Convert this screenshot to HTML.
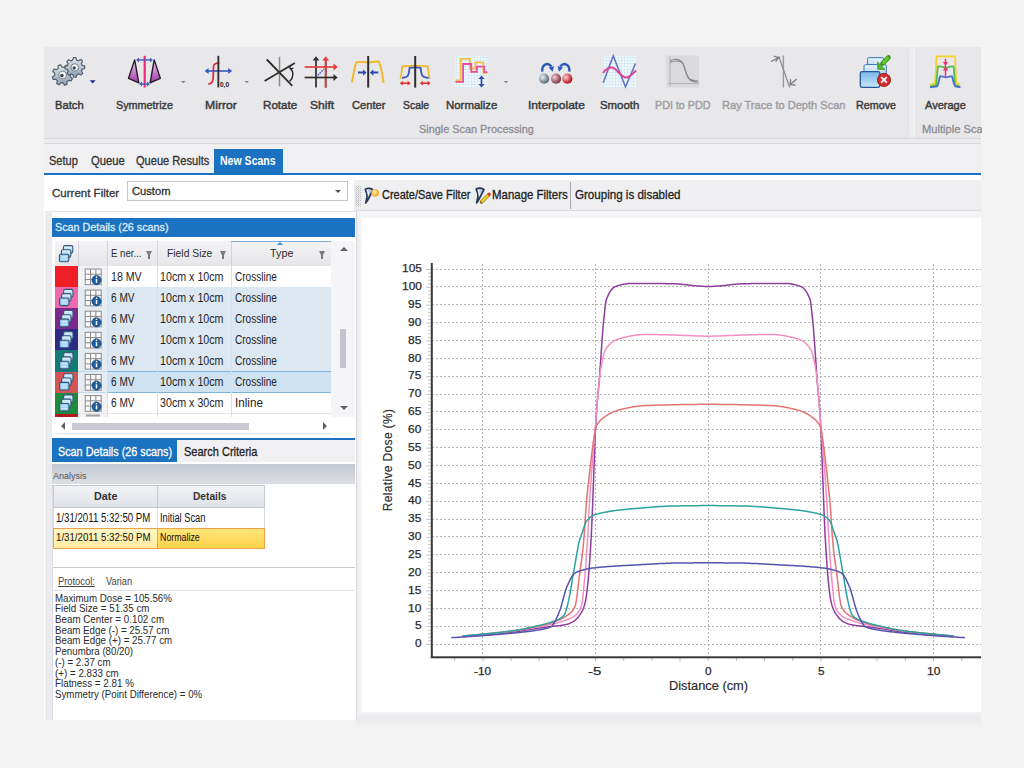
<!DOCTYPE html><html><head><meta charset="utf-8"><style>
html,body{margin:0;padding:0;width:1024px;height:768px;overflow:hidden;background:#f3f3f3;}
body{position:relative;font-family:"Liberation Sans",sans-serif;}
div{box-sizing:border-box;}
.t{position:absolute;white-space:nowrap;line-height:1;transform-origin:0 0;}
</style></head><body>
<div style="position:absolute;left:44px;top:47px;width:937px;height:92px;background:#e8e8eb;"></div>
<div style="position:absolute;left:44px;top:138px;width:937px;height:1px;background:#d4d4d8;"></div>
<div style="position:absolute;left:44px;top:139px;width:937px;height:5px;background:#ececef;"></div>
<div style="position:absolute;left:44px;top:143px;width:937px;height:1px;background:#d8d8dc;"></div>
<div style="position:absolute;left:44px;top:144px;width:937px;height:29px;background:#f0f0f2;"></div>
<div style="position:absolute;left:44px;top:172.5px;width:937px;height:2.5px;background:#1b72c0;"></div>
<div style="position:absolute;left:44px;top:175px;width:937px;height:545px;background:#ffffff;"></div>
<div style="position:absolute;left:908.5px;top:47px;width:6.5px;height:91px;background:#ededf0;"></div>
<div style="position:absolute;left:908px;top:49px;width:1px;height:86px;background:#e4e4e8;"></div>
<div class="t" style="left:55.30px;top:100.00px;font-size:11.34px;color:#3c3c3c;font-weight:normal;transform:scaleX(0.9907);-webkit-text-stroke:0.45px #3c3c3c;">Batch</div>
<div class="t" style="left:115.90px;top:100.00px;font-size:11.34px;color:#3c3c3c;font-weight:normal;transform:scaleX(0.9532);-webkit-text-stroke:0.45px #3c3c3c;">Symmetrize</div>
<div class="t" style="left:205.10px;top:100.00px;font-size:11.34px;color:#3c3c3c;font-weight:normal;transform:scaleX(1.0785);-webkit-text-stroke:0.45px #3c3c3c;">Mirror</div>
<div class="t" style="left:263.20px;top:100.00px;font-size:11.34px;color:#3c3c3c;font-weight:normal;transform:scaleX(1.0242);-webkit-text-stroke:0.45px #3c3c3c;">Rotate</div>
<div class="t" style="left:309.70px;top:100.00px;font-size:11.34px;color:#3c3c3c;font-weight:normal;transform:scaleX(1.0630);-webkit-text-stroke:0.45px #3c3c3c;">Shift</div>
<div class="t" style="left:352.10px;top:100.00px;font-size:11.34px;color:#3c3c3c;font-weight:normal;transform:scaleX(0.9819);-webkit-text-stroke:0.45px #3c3c3c;">Center</div>
<div class="t" style="left:402.70px;top:100.00px;font-size:11.34px;color:#3c3c3c;font-weight:normal;transform:scaleX(0.9173);-webkit-text-stroke:0.45px #3c3c3c;">Scale</div>
<div class="t" style="left:445.60px;top:100.00px;font-size:11.34px;color:#3c3c3c;font-weight:normal;transform:scaleX(1.0078);-webkit-text-stroke:0.45px #3c3c3c;">Normalize</div>
<div class="t" style="left:527.50px;top:100.00px;font-size:11.34px;color:#3c3c3c;font-weight:normal;transform:scaleX(1.0626);-webkit-text-stroke:0.45px #3c3c3c;">Interpolate</div>
<div class="t" style="left:599.70px;top:100.00px;font-size:11.34px;color:#3c3c3c;font-weight:normal;transform:scaleX(1.0065);-webkit-text-stroke:0.45px #3c3c3c;">Smooth</div>
<div class="t" style="left:654.80px;top:100.00px;font-size:11.34px;color:#a0a0a4;font-weight:normal;transform:scaleX(0.9480);-webkit-text-stroke:0.45px #a0a0a4;">PDI to PDD</div>
<div class="t" style="left:722.00px;top:100.00px;font-size:11.34px;color:#a0a0a4;font-weight:normal;transform:scaleX(0.9758);-webkit-text-stroke:0.45px #a0a0a4;">Ray Trace to Depth Scan</div>
<div class="t" style="left:856.00px;top:100.00px;font-size:11.34px;color:#3c3c3c;font-weight:normal;transform:scaleX(0.9481);-webkit-text-stroke:0.45px #3c3c3c;">Remove</div>
<div class="t" style="left:925.40px;top:100.00px;font-size:11.34px;color:#3c3c3c;font-weight:normal;transform:scaleX(0.9738);-webkit-text-stroke:0.45px #3c3c3c;">Average</div>
<div class="t" style="left:419.10px;top:123.69px;font-size:10.76px;color:#8c8c92;font-weight:normal;transform:scaleX(1.0119);-webkit-text-stroke:0.3px currentColor;">Single Scan Processing</div>
<div class="t" style="left:922.40px;top:123.69px;font-size:10.76px;color:#8c8c92;font-weight:normal;transform:scaleX(1.0380);-webkit-text-stroke:0.3px currentColor;">Multiple Scan</div>
<div style="position:absolute;left:214.2px;top:149.4px;width:68.6px;height:23.5px;background:#1b72c0;"></div>
<div class="t" style="left:49.40px;top:155.72px;font-size:11.85px;color:#333;font-weight:normal;transform:scaleX(0.9314);-webkit-text-stroke:0.3px currentColor;">Setup</div>
<div class="t" style="left:90.90px;top:155.72px;font-size:11.85px;color:#333;font-weight:normal;transform:scaleX(0.9489);-webkit-text-stroke:0.3px currentColor;">Queue</div>
<div class="t" style="left:136.30px;top:155.72px;font-size:11.85px;color:#333;font-weight:normal;transform:scaleX(0.9355);-webkit-text-stroke:0.3px currentColor;">Queue Results</div>
<div class="t" style="left:219.80px;top:155.72px;font-size:11.85px;color:#ffffff;font-weight:bold;transform:scaleX(0.8900);">New Scans</div>
<div class="t" style="left:51.80px;top:187.71px;font-size:11.26px;color:#333;font-weight:normal;transform:scaleX(1.0238);-webkit-text-stroke:0.3px currentColor;">Current Filter</div>
<div style="position:absolute;left:126.8px;top:180.7px;width:221px;height:20.5px;background:#fff;border:1px solid #c6c6ca;"></div>
<div class="t" style="left:132.10px;top:185.70px;font-size:10.68px;color:#333;font-weight:normal;transform:scaleX(1.0467);-webkit-text-stroke:0.3px currentColor;">Custom</div>
<div style="position:absolute;left:334.5px;top:189.5px;width:0;height:0;border-left:3.5px solid transparent;border-right:3.5px solid transparent;border-top:3.5px solid #555;"></div>
<div style="position:absolute;left:354px;top:180.3px;width:627px;height:29.5px;background:#efeff1;"></div>
<div style="position:absolute;left:354px;top:209.5px;width:627px;height:1.5px;background:#dcdce0;"></div>
<div style="position:absolute;left:570.3px;top:181.5px;width:1px;height:27px;background:#a8a8ac;"></div>
<div class="t" style="left:382.30px;top:189.39px;font-size:12.06px;color:#222;font-weight:normal;transform:scaleX(0.9105);-webkit-text-stroke:0.3px currentColor;">Create/Save Filter</div>
<div class="t" style="left:491.80px;top:189.39px;font-size:12.06px;color:#222;font-weight:normal;transform:scaleX(0.9500);-webkit-text-stroke:0.3px currentColor;">Manage Filters</div>
<div class="t" style="left:574.90px;top:189.39px;font-size:12.06px;color:#222;font-weight:normal;transform:scaleX(0.9606);-webkit-text-stroke:0.3px currentColor;">Grouping is disabled</div>
<div style="position:absolute;left:45px;top:211px;width:311px;height:509px;background:#fff;border-top:1px solid #e2e2e6;"></div>
<div style="position:absolute;left:45px;top:211px;width:7px;height:509px;background:#ebebf0;"></div>
<div style="position:absolute;left:51.8px;top:217.6px;width:303.2px;height:19.5px;background:#1b72c0;"></div>
<div class="t" style="left:54.90px;top:222.29px;font-size:10.76px;color:#dfeaf6;font-weight:normal;transform:scaleX(0.9997);-webkit-text-stroke:0.3px currentColor;">Scan Details (26 scans)</div>
<div style="position:absolute;left:356px;top:211px;width:625px;height:509px;background:#f2f2f5;"></div>
<div style="position:absolute;left:356px;top:211px;width:625px;height:7px;background:#f4f4f6;"></div>
<div style="position:absolute;left:356px;top:712px;width:625px;height:14px;background:linear-gradient(#f2f2f4,#e9e9ee 45%,#f2f2f2);"></div>
<div style="position:absolute;left:361px;top:218px;width:620px;height:494px;background:#fff;"></div>
<div style="position:absolute;left:356px;top:211px;width:1px;height:509px;background:#d8d8dc;"></div>
<div style="position:absolute;left:357px;top:218px;width:5px;height:494px;background:linear-gradient(90deg,#ececf0,#f8f8fa);"></div>
<div style="position:absolute;left:55px;top:240.5px;width:276.3px;height:26px;background:linear-gradient(#f4f4f6,#e6e6ea);border-bottom:1px solid #d0d0d6;"></div>
<div style="position:absolute;left:78px;top:241px;width:1px;height:25px;background:#d4d4da;"></div>
<div style="position:absolute;left:107px;top:241px;width:1px;height:25px;background:#d4d4da;"></div>
<div style="position:absolute;left:157.2px;top:241px;width:1px;height:25px;background:#d4d4da;"></div>
<div style="position:absolute;left:231.4px;top:241px;width:1px;height:25px;background:#d4d4da;"></div>
<div style="position:absolute;left:231.4px;top:240.5px;width:100px;height:1.5px;background:#79aee0;"></div>
<div style="position:absolute;left:276.5px;top:241.5px;width:0;height:0;border-left:3.5px solid transparent;border-right:3.5px solid transparent;border-bottom:3.5px solid #4a90d0;"></div>
<div class="t" style="left:110.50px;top:247.45px;font-size:11.63px;color:#2a2a2a;font-weight:normal;transform:scaleX(0.8289);">E ner...</div>
<div class="t" style="left:166.50px;top:247.45px;font-size:11.63px;color:#2a2a2a;font-weight:normal;transform:scaleX(0.8885);">Field Size</div>
<div class="t" style="left:269.80px;top:247.45px;font-size:11.63px;color:#2a2a2a;font-weight:normal;transform:scaleX(0.9296);">Type</div>
<div style="position:absolute;left:145.8px;top:251px;width:0;height:0;border-left:3.5px solid transparent;border-right:3.5px solid transparent;border-top:6px solid #7a7a80;"></div>
<div style="position:absolute;left:148.3px;top:255px;width:2px;height:4px;background:#7a7a80;"></div>
<div style="position:absolute;left:219.8px;top:251px;width:0;height:0;border-left:3.5px solid transparent;border-right:3.5px solid transparent;border-top:6px solid #7a7a80;"></div>
<div style="position:absolute;left:222.3px;top:255px;width:2px;height:4px;background:#7a7a80;"></div>
<div style="position:absolute;left:318.8px;top:251px;width:0;height:0;border-left:3.5px solid transparent;border-right:3.5px solid transparent;border-top:6px solid #7a7a80;"></div>
<div style="position:absolute;left:321.3px;top:255px;width:2px;height:4px;background:#7a7a80;"></div>
<div style="position:absolute;left:55px;top:266px;width:276.3px;height:151px;overflow:hidden;">
<div style="position:absolute;left:52px;top:0.00px;width:225px;height:21.30px;background:#ffffff;"></div>
<div style="position:absolute;left:23px;top:0.00px;width:29px;height:21.30px;background:#f2f3f5;"></div>
<div style="position:absolute;left:0;top:0.00px;width:23px;height:21.40px;background:#ee1f27;"></div>
<div style="position:absolute;left:23px;top:20.60px;width:254px;height:1px;background:#e4e6ea;"></div>
<div style="position:absolute;left:52px;top:21.10px;width:225px;height:21.30px;background:#dbe8f2;"></div>
<div style="position:absolute;left:23px;top:21.10px;width:29px;height:21.30px;background:#e4ebf1;"></div>
<div style="position:absolute;left:0;top:21.10px;width:23px;height:21.40px;background:#ef6aac;"></div>
<div style="position:absolute;left:23px;top:41.70px;width:254px;height:1px;background:#c5d8e8;"></div>
<div style="position:absolute;left:52px;top:42.20px;width:225px;height:21.30px;background:#dbe8f2;"></div>
<div style="position:absolute;left:23px;top:42.20px;width:29px;height:21.30px;background:#e4ebf1;"></div>
<div style="position:absolute;left:0;top:42.20px;width:23px;height:21.40px;background:#7a2a8c;"></div>
<div style="position:absolute;left:23px;top:62.80px;width:254px;height:1px;background:#c5d8e8;"></div>
<div style="position:absolute;left:52px;top:63.30px;width:225px;height:21.30px;background:#dbe8f2;"></div>
<div style="position:absolute;left:23px;top:63.30px;width:29px;height:21.30px;background:#e4ebf1;"></div>
<div style="position:absolute;left:0;top:63.30px;width:23px;height:21.40px;background:#2d2b83;"></div>
<div style="position:absolute;left:23px;top:83.90px;width:254px;height:1px;background:#c5d8e8;"></div>
<div style="position:absolute;left:52px;top:84.40px;width:225px;height:21.30px;background:#dbe8f2;"></div>
<div style="position:absolute;left:23px;top:84.40px;width:29px;height:21.30px;background:#e4ebf1;"></div>
<div style="position:absolute;left:0;top:84.40px;width:23px;height:21.40px;background:#137a76;"></div>
<div style="position:absolute;left:23px;top:105.00px;width:254px;height:1px;background:#c5d8e8;"></div>
<div style="position:absolute;left:52px;top:105.50px;width:225px;height:21.30px;background:#cfe2f1;"></div>
<div style="position:absolute;left:23px;top:105.50px;width:29px;height:21.30px;background:#e4ebf1;"></div>
<div style="position:absolute;left:0;top:105.50px;width:23px;height:21.40px;background:#d35454;"></div>
<div style="position:absolute;left:23px;top:126.10px;width:254px;height:1px;background:#c5d8e8;"></div>
<div style="position:absolute;left:52px;top:126.60px;width:225px;height:21.30px;background:#ffffff;"></div>
<div style="position:absolute;left:23px;top:126.60px;width:29px;height:21.30px;background:#f2f3f5;"></div>
<div style="position:absolute;left:0;top:126.60px;width:23px;height:21.40px;background:#1f8a3e;"></div>
<div style="position:absolute;left:23px;top:147.20px;width:254px;height:1px;background:#e4e6ea;"></div>
<div style="position:absolute;left:52px;top:147.70px;width:225px;height:21.30px;background:#ffffff;"></div>
<div style="position:absolute;left:23px;top:147.70px;width:29px;height:21.30px;background:#f2f3f5;"></div>
<div style="position:absolute;left:0;top:147.70px;width:23px;height:21.40px;background:#b31b1b;"></div>
<div style="position:absolute;left:23px;top:168.30px;width:254px;height:1px;background:#c5d8e8;"></div>
<div style="position:absolute;left:52px;top:104.70px;width:225px;height:1.5px;background:#7fb4e0;"></div>
<div style="position:absolute;left:52px;top:125.80px;width:225px;height:1.5px;background:#7fb4e0;"></div>
<div style="position:absolute;left:51.50px;top:0;width:1px;height:151px;background:#dcdde2;"></div>
<div style="position:absolute;left:101.70px;top:0;width:1px;height:151px;background:#dcdde2;"></div>
<div style="position:absolute;left:175.90px;top:0;width:1px;height:151px;background:#dcdde2;"></div>
</div>
<div class="t" style="left:110.70px;top:270.84px;font-size:12.35px;color:#1e1e1e;font-weight:normal;transform:scaleX(0.8602);">18 MV</div>
<div class="t" style="left:160.20px;top:270.84px;font-size:12.35px;color:#1e1e1e;font-weight:normal;transform:scaleX(0.8650);">10cm x 10cm</div>
<div class="t" style="left:234.60px;top:270.84px;font-size:12.35px;color:#1e1e1e;font-weight:normal;transform:scaleX(0.8143);">Crossline</div>
<div class="t" style="left:110.70px;top:291.94px;font-size:12.35px;color:#1e1e1e;font-weight:normal;transform:scaleX(0.8156);">6 MV</div>
<div class="t" style="left:160.20px;top:291.94px;font-size:12.35px;color:#1e1e1e;font-weight:normal;transform:scaleX(0.8650);">10cm x 10cm</div>
<div class="t" style="left:234.60px;top:291.94px;font-size:12.35px;color:#1e1e1e;font-weight:normal;transform:scaleX(0.8143);">Crossline</div>
<div class="t" style="left:110.70px;top:313.04px;font-size:12.35px;color:#1e1e1e;font-weight:normal;transform:scaleX(0.8156);">6 MV</div>
<div class="t" style="left:160.20px;top:313.04px;font-size:12.35px;color:#1e1e1e;font-weight:normal;transform:scaleX(0.8650);">10cm x 10cm</div>
<div class="t" style="left:234.60px;top:313.04px;font-size:12.35px;color:#1e1e1e;font-weight:normal;transform:scaleX(0.8143);">Crossline</div>
<div class="t" style="left:110.70px;top:334.14px;font-size:12.35px;color:#1e1e1e;font-weight:normal;transform:scaleX(0.8156);">6 MV</div>
<div class="t" style="left:160.20px;top:334.14px;font-size:12.35px;color:#1e1e1e;font-weight:normal;transform:scaleX(0.8650);">10cm x 10cm</div>
<div class="t" style="left:234.60px;top:334.14px;font-size:12.35px;color:#1e1e1e;font-weight:normal;transform:scaleX(0.8143);">Crossline</div>
<div class="t" style="left:110.70px;top:355.24px;font-size:12.35px;color:#1e1e1e;font-weight:normal;transform:scaleX(0.8156);">6 MV</div>
<div class="t" style="left:160.20px;top:355.24px;font-size:12.35px;color:#1e1e1e;font-weight:normal;transform:scaleX(0.8650);">10cm x 10cm</div>
<div class="t" style="left:234.60px;top:355.24px;font-size:12.35px;color:#1e1e1e;font-weight:normal;transform:scaleX(0.8143);">Crossline</div>
<div class="t" style="left:110.70px;top:376.34px;font-size:12.35px;color:#1e1e1e;font-weight:normal;transform:scaleX(0.8156);">6 MV</div>
<div class="t" style="left:160.20px;top:376.34px;font-size:12.35px;color:#1e1e1e;font-weight:normal;transform:scaleX(0.8650);">10cm x 10cm</div>
<div class="t" style="left:234.60px;top:376.34px;font-size:12.35px;color:#1e1e1e;font-weight:normal;transform:scaleX(0.8143);">Crossline</div>
<div class="t" style="left:110.70px;top:397.44px;font-size:12.35px;color:#1e1e1e;font-weight:normal;transform:scaleX(0.8156);">6 MV</div>
<div class="t" style="left:160.20px;top:397.44px;font-size:12.35px;color:#1e1e1e;font-weight:normal;transform:scaleX(0.8650);">30cm x 30cm</div>
<div class="t" style="left:234.60px;top:397.44px;font-size:12.35px;color:#1e1e1e;font-weight:normal;transform:scaleX(0.9453);">Inline</div>
<div style="position:absolute;left:331.3px;top:240.5px;width:24px;height:176.5px;background:#f5f5f7;"></div>
<div style="position:absolute;left:339.8px;top:246.5px;width:0;height:0;border-left:4px solid transparent;border-right:4px solid transparent;border-bottom:4px solid #606066;"></div>
<div style="position:absolute;left:339.8px;top:406px;width:0;height:0;border-left:4px solid transparent;border-right:4px solid transparent;border-top:4px solid #606066;"></div>
<div style="position:absolute;left:340px;top:328.7px;width:6.3px;height:39.4px;background:#c2c3cc;"></div>
<div style="position:absolute;left:55px;top:417px;width:276.3px;height:15.5px;background:#ffffff;"></div>
<div style="position:absolute;left:61px;top:422px;width:0;height:0;border-top:4px solid transparent;border-bottom:4px solid transparent;border-right:4px solid #606066;"></div>
<div style="position:absolute;left:322.5px;top:422px;width:0;height:0;border-top:4px solid transparent;border-bottom:4px solid transparent;border-left:4px solid #606066;"></div>
<div style="position:absolute;left:72px;top:422.7px;width:176.6px;height:7px;background:#c8c9d2;"></div>
<div style="position:absolute;left:55px;top:432.5px;width:276.3px;height:1px;background:#e6e6ea;"></div>
<div style="position:absolute;left:51.8px;top:437.8px;width:303.2px;height:2.2px;background:#1b72c0;"></div>
<div style="position:absolute;left:51.8px;top:440px;width:303.2px;height:22.2px;background:#f0f0f2;"></div>
<div style="position:absolute;left:51.8px;top:439.4px;width:125px;height:22.8px;background:#1b72c0;"></div>
<div class="t" style="left:58.00px;top:444.59px;font-size:13.01px;color:#ffffff;font-weight:normal;transform:scaleX(0.8311);-webkit-text-stroke:0.3px currentColor;">Scan Details (26 scans)</div>
<div class="t" style="left:184.00px;top:444.59px;font-size:13.01px;color:#222;font-weight:normal;transform:scaleX(0.8466);-webkit-text-stroke:0.3px currentColor;">Search Criteria</div>
<div style="position:absolute;left:51.8px;top:463.7px;width:303.2px;height:20px;background:linear-gradient(#c4c8d0,#dcdee4);"></div>
<div class="t" style="left:53.40px;top:471.03px;font-size:9.88px;color:#505058;font-weight:normal;transform:scaleX(0.9081);">Analysis</div>
<div style="position:absolute;left:52.7px;top:484.7px;width:212.5px;height:23.4px;background:linear-gradient(#f2f3f6,#dfe2e8);border:1px solid #c4c8d0;"></div>
<div style="position:absolute;left:157.1px;top:484.7px;width:1px;height:23.4px;background:#c4c8d0;"></div>
<div class="t" style="left:94.00px;top:491.19px;font-size:10.76px;color:#333;font-weight:bold;transform:scaleX(1.0038);">Date</div>
<div class="t" style="left:193.40px;top:491.19px;font-size:10.76px;color:#333;font-weight:bold;transform:scaleX(0.9471);">Details</div>
<div style="position:absolute;left:52.7px;top:508.1px;width:212.5px;height:20.4px;background:#fff;border-left:1px solid #d8dbe0;border-right:1px solid #d8dbe0;"></div>
<div style="position:absolute;left:157.1px;top:508.1px;width:1px;height:20.4px;background:#e0e2e6;"></div>
<div class="t" style="left:55.90px;top:511.12px;font-size:13.08px;color:#111;font-weight:normal;transform:scaleX(0.7386);">1/31/2011 5:32:50 PM</div>
<div class="t" style="left:159.60px;top:511.12px;font-size:13.08px;color:#111;font-weight:normal;transform:scaleX(0.7095);">Initial Scan</div>
<div style="position:absolute;left:52.7px;top:528.4px;width:104.9px;height:20.4px;background:linear-gradient(#fff6c4,#ffeaa0);border:1px solid #eda24a;border-right:none;"></div>
<div style="position:absolute;left:157.1px;top:528.4px;width:108.1px;height:20.4px;background:linear-gradient(#ffe47a,#ffd34a);border:1px solid #eda24a;"></div>
<div class="t" style="left:55.90px;top:532.74px;font-size:10.47px;color:#111;font-weight:normal;transform:scaleX(0.9242);">1/31/2011 5:32:50 PM</div>
<div class="t" style="left:159.60px;top:532.74px;font-size:10.47px;color:#111;font-weight:normal;transform:scaleX(0.8436);">Normalize</div>
<div style="position:absolute;left:51.8px;top:567.3px;width:303.2px;height:1.2px;background:#c8c8cc;"></div>
<div style="position:absolute;left:51.8px;top:483.7px;width:1px;height:236.3px;background:#dcdce2;"></div>
<div class="t" style="left:57.70px;top:575.79px;font-size:10.76px;color:#444;font-weight:normal;transform:scaleX(0.8672);text-decoration:underline;">Protocol:</div>
<div class="t" style="left:106.40px;top:575.79px;font-size:10.76px;color:#444;font-weight:normal;transform:scaleX(0.8619);">Varian</div>
<div style="position:absolute;left:52.8px;top:590px;width:302px;height:1px;background:#e2e2e6;"></div>
<div class="t" style="left:55.00px;top:593.56px;font-size:10.20px;color:#2a2a2a;font-weight:normal;transform:scaleX(0.9536);">Maximum Dose = 105.56%</div>
<div class="t" style="left:55.00px;top:604.27px;font-size:10.20px;color:#2a2a2a;font-weight:normal;transform:scaleX(0.9618);">Field Size = 51.35 cm</div>
<div class="t" style="left:55.00px;top:614.98px;font-size:10.20px;color:#2a2a2a;font-weight:normal;transform:scaleX(0.9604);">Beam Center = 0.102 cm</div>
<div class="t" style="left:55.00px;top:625.69px;font-size:10.20px;color:#2a2a2a;font-weight:normal;transform:scaleX(0.9544);">Beam Edge (-) = 25.57 cm</div>
<div class="t" style="left:55.00px;top:636.40px;font-size:10.20px;color:#2a2a2a;font-weight:normal;transform:scaleX(0.9581);">Beam Edge (+) = 25.77 cm</div>
<div class="t" style="left:55.00px;top:647.11px;font-size:10.20px;color:#2a2a2a;font-weight:normal;transform:scaleX(0.9510);">Penumbra (80/20)</div>
<div class="t" style="left:55.00px;top:657.82px;font-size:10.20px;color:#2a2a2a;font-weight:normal;transform:scaleX(0.9564);">(-) = 2.37 cm</div>
<div class="t" style="left:55.00px;top:668.53px;font-size:10.20px;color:#2a2a2a;font-weight:normal;transform:scaleX(0.9615);">(+) = 2.833 cm</div>
<div class="t" style="left:55.00px;top:679.24px;font-size:10.20px;color:#2a2a2a;font-weight:normal;transform:scaleX(0.9640);">Flatness = 2.81 %</div>
<div class="t" style="left:55.00px;top:689.95px;font-size:10.20px;color:#2a2a2a;font-weight:normal;transform:scaleX(0.9553);">Symmetry (Point Difference) = 0%</div>
<svg style="position:absolute;left:0;top:0" width="1024" height="768">
<defs><clipPath id="cp"><rect x="361" y="218" width="620" height="494"/></clipPath></defs>
<g clip-path="url(#cp)">
<line x1="432" y1="644.5" x2="981" y2="644.5" stroke="#b4b4b4" stroke-width="1" stroke-dasharray="2,2"/>
<line x1="432" y1="626.5" x2="981" y2="626.5" stroke="#b4b4b4" stroke-width="1" stroke-dasharray="2,2"/>
<line x1="432" y1="608.5" x2="981" y2="608.5" stroke="#b4b4b4" stroke-width="1" stroke-dasharray="2,2"/>
<line x1="432" y1="590.5" x2="981" y2="590.5" stroke="#b4b4b4" stroke-width="1" stroke-dasharray="2,2"/>
<line x1="432" y1="572.5" x2="981" y2="572.5" stroke="#b4b4b4" stroke-width="1" stroke-dasharray="2,2"/>
<line x1="432" y1="554.5" x2="981" y2="554.5" stroke="#b4b4b4" stroke-width="1" stroke-dasharray="2,2"/>
<line x1="432" y1="536.5" x2="981" y2="536.5" stroke="#b4b4b4" stroke-width="1" stroke-dasharray="2,2"/>
<line x1="432" y1="519.5" x2="981" y2="519.5" stroke="#b4b4b4" stroke-width="1" stroke-dasharray="2,2"/>
<line x1="432" y1="501.5" x2="981" y2="501.5" stroke="#b4b4b4" stroke-width="1" stroke-dasharray="2,2"/>
<line x1="432" y1="483.5" x2="981" y2="483.5" stroke="#b4b4b4" stroke-width="1" stroke-dasharray="2,2"/>
<line x1="432" y1="465.5" x2="981" y2="465.5" stroke="#b4b4b4" stroke-width="1" stroke-dasharray="2,2"/>
<line x1="432" y1="447.5" x2="981" y2="447.5" stroke="#b4b4b4" stroke-width="1" stroke-dasharray="2,2"/>
<line x1="432" y1="429.5" x2="981" y2="429.5" stroke="#b4b4b4" stroke-width="1" stroke-dasharray="2,2"/>
<line x1="432" y1="411.5" x2="981" y2="411.5" stroke="#b4b4b4" stroke-width="1" stroke-dasharray="2,2"/>
<line x1="432" y1="394.5" x2="981" y2="394.5" stroke="#b4b4b4" stroke-width="1" stroke-dasharray="2,2"/>
<line x1="432" y1="376.5" x2="981" y2="376.5" stroke="#b4b4b4" stroke-width="1" stroke-dasharray="2,2"/>
<line x1="432" y1="358.5" x2="981" y2="358.5" stroke="#b4b4b4" stroke-width="1" stroke-dasharray="2,2"/>
<line x1="432" y1="340.5" x2="981" y2="340.5" stroke="#b4b4b4" stroke-width="1" stroke-dasharray="2,2"/>
<line x1="432" y1="322.5" x2="981" y2="322.5" stroke="#b4b4b4" stroke-width="1" stroke-dasharray="2,2"/>
<line x1="432" y1="304.5" x2="981" y2="304.5" stroke="#b4b4b4" stroke-width="1" stroke-dasharray="2,2"/>
<line x1="432" y1="286.5" x2="981" y2="286.5" stroke="#b4b4b4" stroke-width="1" stroke-dasharray="2,2"/>
<line x1="432" y1="269.5" x2="981" y2="269.5" stroke="#b4b4b4" stroke-width="1" stroke-dasharray="2,2"/>
<line x1="482.5" y1="264" x2="482.5" y2="656" stroke="#b4b4b4" stroke-width="1" stroke-dasharray="2,2"/>
<line x1="595.5" y1="264" x2="595.5" y2="656" stroke="#b4b4b4" stroke-width="1" stroke-dasharray="2,2"/>
<line x1="708.5" y1="264" x2="708.5" y2="656" stroke="#b4b4b4" stroke-width="1" stroke-dasharray="2,2"/>
<line x1="820.5" y1="264" x2="820.5" y2="656" stroke="#b4b4b4" stroke-width="1" stroke-dasharray="2,2"/>
<line x1="933.5" y1="264" x2="933.5" y2="656" stroke="#b4b4b4" stroke-width="1" stroke-dasharray="2,2"/>
<line x1="426" y1="644.5" x2="431" y2="644.5" stroke="#c8c8c8" stroke-width="1"/>
<line x1="428" y1="640.9" x2="431" y2="640.9" stroke="#c8c8c8" stroke-width="1"/>
<line x1="428" y1="637.4" x2="431" y2="637.4" stroke="#c8c8c8" stroke-width="1"/>
<line x1="428" y1="633.8" x2="431" y2="633.8" stroke="#c8c8c8" stroke-width="1"/>
<line x1="428" y1="630.2" x2="431" y2="630.2" stroke="#c8c8c8" stroke-width="1"/>
<line x1="426" y1="626.6" x2="431" y2="626.6" stroke="#c8c8c8" stroke-width="1"/>
<line x1="428" y1="623.1" x2="431" y2="623.1" stroke="#c8c8c8" stroke-width="1"/>
<line x1="428" y1="619.5" x2="431" y2="619.5" stroke="#c8c8c8" stroke-width="1"/>
<line x1="428" y1="615.9" x2="431" y2="615.9" stroke="#c8c8c8" stroke-width="1"/>
<line x1="428" y1="612.4" x2="431" y2="612.4" stroke="#c8c8c8" stroke-width="1"/>
<line x1="426" y1="608.8" x2="431" y2="608.8" stroke="#c8c8c8" stroke-width="1"/>
<line x1="428" y1="605.2" x2="431" y2="605.2" stroke="#c8c8c8" stroke-width="1"/>
<line x1="428" y1="601.6" x2="431" y2="601.6" stroke="#c8c8c8" stroke-width="1"/>
<line x1="428" y1="598.1" x2="431" y2="598.1" stroke="#c8c8c8" stroke-width="1"/>
<line x1="428" y1="594.5" x2="431" y2="594.5" stroke="#c8c8c8" stroke-width="1"/>
<line x1="426" y1="590.9" x2="431" y2="590.9" stroke="#c8c8c8" stroke-width="1"/>
<line x1="428" y1="587.4" x2="431" y2="587.4" stroke="#c8c8c8" stroke-width="1"/>
<line x1="428" y1="583.8" x2="431" y2="583.8" stroke="#c8c8c8" stroke-width="1"/>
<line x1="428" y1="580.2" x2="431" y2="580.2" stroke="#c8c8c8" stroke-width="1"/>
<line x1="428" y1="576.6" x2="431" y2="576.6" stroke="#c8c8c8" stroke-width="1"/>
<line x1="426" y1="573.1" x2="431" y2="573.1" stroke="#c8c8c8" stroke-width="1"/>
<line x1="428" y1="569.5" x2="431" y2="569.5" stroke="#c8c8c8" stroke-width="1"/>
<line x1="428" y1="565.9" x2="431" y2="565.9" stroke="#c8c8c8" stroke-width="1"/>
<line x1="428" y1="562.4" x2="431" y2="562.4" stroke="#c8c8c8" stroke-width="1"/>
<line x1="428" y1="558.8" x2="431" y2="558.8" stroke="#c8c8c8" stroke-width="1"/>
<line x1="426" y1="555.2" x2="431" y2="555.2" stroke="#c8c8c8" stroke-width="1"/>
<line x1="428" y1="551.6" x2="431" y2="551.6" stroke="#c8c8c8" stroke-width="1"/>
<line x1="428" y1="548.1" x2="431" y2="548.1" stroke="#c8c8c8" stroke-width="1"/>
<line x1="428" y1="544.5" x2="431" y2="544.5" stroke="#c8c8c8" stroke-width="1"/>
<line x1="428" y1="540.9" x2="431" y2="540.9" stroke="#c8c8c8" stroke-width="1"/>
<line x1="426" y1="537.4" x2="431" y2="537.4" stroke="#c8c8c8" stroke-width="1"/>
<line x1="428" y1="533.8" x2="431" y2="533.8" stroke="#c8c8c8" stroke-width="1"/>
<line x1="428" y1="530.2" x2="431" y2="530.2" stroke="#c8c8c8" stroke-width="1"/>
<line x1="428" y1="526.6" x2="431" y2="526.6" stroke="#c8c8c8" stroke-width="1"/>
<line x1="428" y1="523.1" x2="431" y2="523.1" stroke="#c8c8c8" stroke-width="1"/>
<line x1="426" y1="519.5" x2="431" y2="519.5" stroke="#c8c8c8" stroke-width="1"/>
<line x1="428" y1="515.9" x2="431" y2="515.9" stroke="#c8c8c8" stroke-width="1"/>
<line x1="428" y1="512.4" x2="431" y2="512.4" stroke="#c8c8c8" stroke-width="1"/>
<line x1="428" y1="508.8" x2="431" y2="508.8" stroke="#c8c8c8" stroke-width="1"/>
<line x1="428" y1="505.2" x2="431" y2="505.2" stroke="#c8c8c8" stroke-width="1"/>
<line x1="426" y1="501.6" x2="431" y2="501.6" stroke="#c8c8c8" stroke-width="1"/>
<line x1="428" y1="498.1" x2="431" y2="498.1" stroke="#c8c8c8" stroke-width="1"/>
<line x1="428" y1="494.5" x2="431" y2="494.5" stroke="#c8c8c8" stroke-width="1"/>
<line x1="428" y1="490.9" x2="431" y2="490.9" stroke="#c8c8c8" stroke-width="1"/>
<line x1="428" y1="487.4" x2="431" y2="487.4" stroke="#c8c8c8" stroke-width="1"/>
<line x1="426" y1="483.8" x2="431" y2="483.8" stroke="#c8c8c8" stroke-width="1"/>
<line x1="428" y1="480.2" x2="431" y2="480.2" stroke="#c8c8c8" stroke-width="1"/>
<line x1="428" y1="476.6" x2="431" y2="476.6" stroke="#c8c8c8" stroke-width="1"/>
<line x1="428" y1="473.1" x2="431" y2="473.1" stroke="#c8c8c8" stroke-width="1"/>
<line x1="428" y1="469.5" x2="431" y2="469.5" stroke="#c8c8c8" stroke-width="1"/>
<line x1="426" y1="465.9" x2="431" y2="465.9" stroke="#c8c8c8" stroke-width="1"/>
<line x1="428" y1="462.4" x2="431" y2="462.4" stroke="#c8c8c8" stroke-width="1"/>
<line x1="428" y1="458.8" x2="431" y2="458.8" stroke="#c8c8c8" stroke-width="1"/>
<line x1="428" y1="455.2" x2="431" y2="455.2" stroke="#c8c8c8" stroke-width="1"/>
<line x1="428" y1="451.6" x2="431" y2="451.6" stroke="#c8c8c8" stroke-width="1"/>
<line x1="426" y1="448.1" x2="431" y2="448.1" stroke="#c8c8c8" stroke-width="1"/>
<line x1="428" y1="444.5" x2="431" y2="444.5" stroke="#c8c8c8" stroke-width="1"/>
<line x1="428" y1="440.9" x2="431" y2="440.9" stroke="#c8c8c8" stroke-width="1"/>
<line x1="428" y1="437.4" x2="431" y2="437.4" stroke="#c8c8c8" stroke-width="1"/>
<line x1="428" y1="433.8" x2="431" y2="433.8" stroke="#c8c8c8" stroke-width="1"/>
<line x1="426" y1="430.2" x2="431" y2="430.2" stroke="#c8c8c8" stroke-width="1"/>
<line x1="428" y1="426.6" x2="431" y2="426.6" stroke="#c8c8c8" stroke-width="1"/>
<line x1="428" y1="423.1" x2="431" y2="423.1" stroke="#c8c8c8" stroke-width="1"/>
<line x1="428" y1="419.5" x2="431" y2="419.5" stroke="#c8c8c8" stroke-width="1"/>
<line x1="428" y1="415.9" x2="431" y2="415.9" stroke="#c8c8c8" stroke-width="1"/>
<line x1="426" y1="412.4" x2="431" y2="412.4" stroke="#c8c8c8" stroke-width="1"/>
<line x1="428" y1="408.8" x2="431" y2="408.8" stroke="#c8c8c8" stroke-width="1"/>
<line x1="428" y1="405.2" x2="431" y2="405.2" stroke="#c8c8c8" stroke-width="1"/>
<line x1="428" y1="401.6" x2="431" y2="401.6" stroke="#c8c8c8" stroke-width="1"/>
<line x1="428" y1="398.1" x2="431" y2="398.1" stroke="#c8c8c8" stroke-width="1"/>
<line x1="426" y1="394.5" x2="431" y2="394.5" stroke="#c8c8c8" stroke-width="1"/>
<line x1="428" y1="390.9" x2="431" y2="390.9" stroke="#c8c8c8" stroke-width="1"/>
<line x1="428" y1="387.4" x2="431" y2="387.4" stroke="#c8c8c8" stroke-width="1"/>
<line x1="428" y1="383.8" x2="431" y2="383.8" stroke="#c8c8c8" stroke-width="1"/>
<line x1="428" y1="380.2" x2="431" y2="380.2" stroke="#c8c8c8" stroke-width="1"/>
<line x1="426" y1="376.6" x2="431" y2="376.6" stroke="#c8c8c8" stroke-width="1"/>
<line x1="428" y1="373.1" x2="431" y2="373.1" stroke="#c8c8c8" stroke-width="1"/>
<line x1="428" y1="369.5" x2="431" y2="369.5" stroke="#c8c8c8" stroke-width="1"/>
<line x1="428" y1="365.9" x2="431" y2="365.9" stroke="#c8c8c8" stroke-width="1"/>
<line x1="428" y1="362.4" x2="431" y2="362.4" stroke="#c8c8c8" stroke-width="1"/>
<line x1="426" y1="358.8" x2="431" y2="358.8" stroke="#c8c8c8" stroke-width="1"/>
<line x1="428" y1="355.2" x2="431" y2="355.2" stroke="#c8c8c8" stroke-width="1"/>
<line x1="428" y1="351.6" x2="431" y2="351.6" stroke="#c8c8c8" stroke-width="1"/>
<line x1="428" y1="348.1" x2="431" y2="348.1" stroke="#c8c8c8" stroke-width="1"/>
<line x1="428" y1="344.5" x2="431" y2="344.5" stroke="#c8c8c8" stroke-width="1"/>
<line x1="426" y1="340.9" x2="431" y2="340.9" stroke="#c8c8c8" stroke-width="1"/>
<line x1="428" y1="337.4" x2="431" y2="337.4" stroke="#c8c8c8" stroke-width="1"/>
<line x1="428" y1="333.8" x2="431" y2="333.8" stroke="#c8c8c8" stroke-width="1"/>
<line x1="428" y1="330.2" x2="431" y2="330.2" stroke="#c8c8c8" stroke-width="1"/>
<line x1="428" y1="326.6" x2="431" y2="326.6" stroke="#c8c8c8" stroke-width="1"/>
<line x1="426" y1="323.1" x2="431" y2="323.1" stroke="#c8c8c8" stroke-width="1"/>
<line x1="428" y1="319.5" x2="431" y2="319.5" stroke="#c8c8c8" stroke-width="1"/>
<line x1="428" y1="315.9" x2="431" y2="315.9" stroke="#c8c8c8" stroke-width="1"/>
<line x1="428" y1="312.4" x2="431" y2="312.4" stroke="#c8c8c8" stroke-width="1"/>
<line x1="428" y1="308.8" x2="431" y2="308.8" stroke="#c8c8c8" stroke-width="1"/>
<line x1="426" y1="305.2" x2="431" y2="305.2" stroke="#c8c8c8" stroke-width="1"/>
<line x1="428" y1="301.6" x2="431" y2="301.6" stroke="#c8c8c8" stroke-width="1"/>
<line x1="428" y1="298.1" x2="431" y2="298.1" stroke="#c8c8c8" stroke-width="1"/>
<line x1="428" y1="294.5" x2="431" y2="294.5" stroke="#c8c8c8" stroke-width="1"/>
<line x1="428" y1="290.9" x2="431" y2="290.9" stroke="#c8c8c8" stroke-width="1"/>
<line x1="426" y1="287.4" x2="431" y2="287.4" stroke="#c8c8c8" stroke-width="1"/>
<line x1="428" y1="283.8" x2="431" y2="283.8" stroke="#c8c8c8" stroke-width="1"/>
<line x1="428" y1="280.2" x2="431" y2="280.2" stroke="#c8c8c8" stroke-width="1"/>
<line x1="428" y1="276.6" x2="431" y2="276.6" stroke="#c8c8c8" stroke-width="1"/>
<line x1="428" y1="273.1" x2="431" y2="273.1" stroke="#c8c8c8" stroke-width="1"/>
<line x1="426" y1="269.5" x2="431" y2="269.5" stroke="#c8c8c8" stroke-width="1"/>
<line x1="454.7" y1="657" x2="454.7" y2="661" stroke="#c0c0c0" stroke-width="1"/>
<line x1="482.9" y1="657" x2="482.9" y2="661" stroke="#c0c0c0" stroke-width="1"/>
<line x1="511.1" y1="657" x2="511.1" y2="661" stroke="#c0c0c0" stroke-width="1"/>
<line x1="539.2" y1="657" x2="539.2" y2="661" stroke="#c0c0c0" stroke-width="1"/>
<line x1="567.4" y1="657" x2="567.4" y2="661" stroke="#c0c0c0" stroke-width="1"/>
<line x1="595.6" y1="657" x2="595.6" y2="661" stroke="#c0c0c0" stroke-width="1"/>
<line x1="623.7" y1="657" x2="623.7" y2="661" stroke="#c0c0c0" stroke-width="1"/>
<line x1="651.9" y1="657" x2="651.9" y2="661" stroke="#c0c0c0" stroke-width="1"/>
<line x1="680.0" y1="657" x2="680.0" y2="661" stroke="#c0c0c0" stroke-width="1"/>
<line x1="708.2" y1="657" x2="708.2" y2="661" stroke="#c0c0c0" stroke-width="1"/>
<line x1="736.4" y1="657" x2="736.4" y2="661" stroke="#c0c0c0" stroke-width="1"/>
<line x1="764.5" y1="657" x2="764.5" y2="661" stroke="#c0c0c0" stroke-width="1"/>
<line x1="792.7" y1="657" x2="792.7" y2="661" stroke="#c0c0c0" stroke-width="1"/>
<line x1="820.9" y1="657" x2="820.9" y2="661" stroke="#c0c0c0" stroke-width="1"/>
<line x1="849.0" y1="657" x2="849.0" y2="661" stroke="#c0c0c0" stroke-width="1"/>
<line x1="877.2" y1="657" x2="877.2" y2="661" stroke="#c0c0c0" stroke-width="1"/>
<line x1="905.3" y1="657" x2="905.3" y2="661" stroke="#c0c0c0" stroke-width="1"/>
<line x1="933.5" y1="657" x2="933.5" y2="661" stroke="#c0c0c0" stroke-width="1"/>
<line x1="961.7" y1="657" x2="961.7" y2="661" stroke="#c0c0c0" stroke-width="1"/>
<polyline fill="none" stroke="#8e3d9f" stroke-width="1.5" stroke-linejoin="round" points="462.6,636.6 463.6,636.6 464.6,636.5 465.6,636.4 466.6,636.4 467.5,636.3 468.5,636.3 469.5,636.2 470.5,636.1 471.5,636.1 472.4,636.0 473.4,635.9 474.4,635.9 475.4,635.8 476.4,635.7 477.4,635.6 478.3,635.6 479.3,635.5 480.3,635.4 481.3,635.3 482.3,635.3 483.3,635.2 484.2,635.1 485.2,635.0 486.2,634.9 487.2,634.8 488.2,634.8 489.1,634.7 490.1,634.6 491.1,634.5 492.1,634.4 493.1,634.3 494.1,634.2 495.0,634.1 496.0,634.0 497.0,633.9 498.0,633.8 499.0,633.7 500.0,633.6 500.9,633.5 501.9,633.4 502.9,633.3 503.9,633.2 504.9,633.1 505.8,633.0 506.8,632.8 507.8,632.7 508.8,632.6 509.8,632.5 510.8,632.4 511.7,632.3 512.7,632.1 513.7,632.0 514.7,631.9 515.7,631.8 516.6,631.6 517.6,631.5 518.6,631.4 519.6,631.2 520.6,631.1 521.6,630.9 522.5,630.8 523.5,630.6 524.5,630.5 525.5,630.3 526.5,630.1 527.5,630.0 528.4,629.8 529.4,629.6 530.4,629.5 531.4,629.3 532.4,629.1 533.3,629.0 534.3,628.8 535.3,628.7 536.3,628.5 537.3,628.4 538.3,628.2 539.2,628.1 540.2,628.0 541.2,627.8 542.2,627.7 543.2,627.6 544.2,627.5 545.1,627.3 546.1,627.2 547.1,627.1 548.1,627.0 549.1,626.8 550.0,626.7 551.0,626.6 552.0,626.4 553.0,626.3 554.0,626.2 555.0,626.1 555.9,626.0 556.9,625.9 557.9,625.8 558.9,625.7 559.9,625.6 560.9,625.4 561.8,625.3 562.8,625.2 563.8,625.0 564.8,624.8 565.8,624.6 566.7,624.4 567.7,624.1 568.7,623.8 569.7,623.4 570.7,622.9 571.7,622.4 572.6,621.9 573.6,621.3 574.6,620.6 575.6,619.8 576.6,618.9 577.6,617.9 578.5,616.7 579.5,615.4 580.5,613.9 581.5,612.3 582.5,610.5 583.4,608.2 584.4,605.4 585.4,601.6 586.4,595.9 587.4,587.6 588.4,577.7 589.3,566.5 590.3,552.3 591.3,535.4 592.3,513.1 593.3,486.9 594.3,459.9 595.2,435.2 596.2,416.1 597.2,402.7 598.2,391.7 599.2,380.9 600.1,368.3 601.1,353.9 602.1,339.4 603.1,326.7 604.1,316.6 605.1,307.2 606.0,300.7 607.0,297.8 608.0,295.6 609.0,293.6 610.0,291.9 611.0,290.4 611.9,289.2 612.9,288.2 613.9,287.4 614.9,286.8 615.9,286.4 616.8,286.0 617.8,285.7 618.8,285.4 619.8,285.1 620.8,284.9 621.8,284.6 622.7,284.4 623.7,284.2 624.7,284.0 625.7,283.9 626.7,283.7 627.7,283.6 628.6,283.5 629.6,283.5 630.6,283.4 631.6,283.4 632.6,283.4 633.5,283.4 634.5,283.4 635.5,283.4 636.5,283.4 637.5,283.4 638.5,283.4 639.4,283.4 640.4,283.4 641.4,283.4 642.4,283.5 643.4,283.5 644.3,283.5 645.3,283.5 646.3,283.5 647.3,283.5 648.3,283.5 649.3,283.5 650.2,283.5 651.2,283.5 652.2,283.5 653.2,283.5 654.2,283.5 655.2,283.5 656.1,283.5 657.1,283.6 658.1,283.6 659.1,283.6 660.1,283.6 661.0,283.6 662.0,283.6 663.0,283.6 664.0,283.6 665.0,283.6 666.0,283.7 666.9,283.7 667.9,283.7 668.9,283.7 669.9,283.7 670.9,283.7 671.9,283.7 672.8,283.8 673.8,283.8 674.8,283.8 675.8,283.8 676.8,283.9 677.7,283.9 678.7,284.0 679.7,284.1 680.7,284.2 681.7,284.3 682.7,284.4 683.6,284.5 684.6,284.6 685.6,284.7 686.6,284.9 687.6,285.0 688.6,285.1 689.5,285.2 690.5,285.3 691.5,285.5 692.5,285.6 693.5,285.7 694.4,285.7 695.4,285.8 696.4,285.9 697.4,286.0 698.4,286.0 699.4,286.1 700.3,286.1 701.3,286.2 702.3,286.3 703.3,286.3 704.3,286.4 705.3,286.5 706.2,286.5 707.2,286.6 708.2,286.6 709.2,286.6 710.2,286.5 711.1,286.5 712.1,286.4 713.1,286.3 714.1,286.3 715.1,286.2 716.1,286.1 717.0,286.1 718.0,286.0 719.0,286.0 720.0,285.9 721.0,285.8 722.0,285.7 722.9,285.7 723.9,285.6 724.9,285.5 725.9,285.3 726.9,285.2 727.8,285.1 728.8,285.0 729.8,284.9 730.8,284.7 731.8,284.6 732.8,284.5 733.7,284.4 734.7,284.3 735.7,284.2 736.7,284.1 737.7,284.0 738.7,283.9 739.6,283.9 740.6,283.8 741.6,283.8 742.6,283.8 743.6,283.8 744.5,283.7 745.5,283.7 746.5,283.7 747.5,283.7 748.5,283.7 749.5,283.7 750.4,283.7 751.4,283.6 752.4,283.6 753.4,283.6 754.4,283.6 755.4,283.6 756.3,283.6 757.3,283.6 758.3,283.6 759.3,283.6 760.3,283.5 761.2,283.5 762.2,283.5 763.2,283.5 764.2,283.5 765.2,283.5 766.2,283.5 767.1,283.5 768.1,283.5 769.1,283.5 770.1,283.5 771.1,283.5 772.1,283.5 773.0,283.5 774.0,283.5 775.0,283.4 776.0,283.4 777.0,283.4 777.9,283.4 778.9,283.4 779.9,283.4 780.9,283.4 781.9,283.4 782.9,283.4 783.8,283.4 784.8,283.4 785.8,283.4 786.8,283.5 787.8,283.5 788.7,283.6 789.7,283.7 790.7,283.9 791.7,284.0 792.7,284.2 793.7,284.4 794.6,284.6 795.6,284.9 796.6,285.1 797.6,285.4 798.6,285.7 799.6,286.0 800.5,286.4 801.5,286.8 802.5,287.4 803.5,288.2 804.5,289.2 805.4,290.4 806.4,291.9 807.4,293.6 808.4,295.6 809.4,297.8 810.4,300.7 811.3,307.2 812.3,316.6 813.3,326.7 814.3,339.4 815.3,353.9 816.3,368.3 817.2,380.9 818.2,391.7 819.2,402.7 820.2,416.1 821.2,435.2 822.1,459.9 823.1,486.9 824.1,513.1 825.1,535.4 826.1,552.3 827.1,566.5 828.0,577.7 829.0,587.6 830.0,595.9 831.0,601.6 832.0,605.4 833.0,608.2 833.9,610.5 834.9,612.3 835.9,613.9 836.9,615.4 837.9,616.7 838.8,617.9 839.8,618.9 840.8,619.8 841.8,620.6 842.8,621.3 843.8,621.9 844.7,622.4 845.7,622.9 846.7,623.4 847.7,623.8 848.7,624.1 849.7,624.4 850.6,624.6 851.6,624.8 852.6,625.0 853.6,625.2 854.6,625.3 855.5,625.4 856.5,625.6 857.5,625.7 858.5,625.8 859.5,625.9 860.5,626.0 861.4,626.1 862.4,626.2 863.4,626.3 864.4,626.4 865.4,626.6 866.4,626.7 867.3,626.8 868.3,627.0 869.3,627.1 870.3,627.2 871.3,627.3 872.2,627.5 873.2,627.6 874.2,627.7 875.2,627.8 876.2,628.0 877.2,628.1 878.1,628.2 879.1,628.4 880.1,628.5 881.1,628.7 882.1,628.8 883.1,629.0 884.0,629.1 885.0,629.3 886.0,629.5 887.0,629.6 888.0,629.8 888.9,630.0 889.9,630.1 890.9,630.3 891.9,630.5 892.9,630.6 893.9,630.8 894.8,630.9 895.8,631.1 896.8,631.2 897.8,631.4 898.8,631.5 899.8,631.6 900.7,631.8 901.7,631.9 902.7,632.0 903.7,632.1 904.7,632.3 905.6,632.4 906.6,632.5 907.6,632.6 908.6,632.7 909.6,632.8 910.6,633.0 911.5,633.1 912.5,633.2 913.5,633.3 914.5,633.4 915.5,633.5 916.4,633.6 917.4,633.7 918.4,633.8 919.4,633.9 920.4,634.0 921.4,634.1 922.3,634.2 923.3,634.3 924.3,634.4 925.3,634.5 926.3,634.6 927.3,634.7 928.2,634.8 929.2,634.8 930.2,634.9 931.2,635.0 932.2,635.1 933.1,635.2 934.1,635.3 935.1,635.3 936.1,635.4 937.1,635.5 938.1,635.6 939.0,635.6 940.0,635.7 941.0,635.8 942.0,635.9 943.0,635.9 944.0,636.0 944.9,636.1 945.9,636.1 946.9,636.2 947.9,636.3 948.9,636.3 949.8,636.4 950.8,636.4 951.8,636.5 952.8,636.6 953.8,636.6"/>
<polyline fill="none" stroke="#f48ec2" stroke-width="1.5" stroke-linejoin="round" points="462.6,636.1 463.6,636.1 464.6,636.0 465.6,635.9 466.6,635.9 467.5,635.8 468.5,635.7 469.5,635.6 470.5,635.6 471.5,635.5 472.4,635.4 473.4,635.3 474.4,635.2 475.4,635.2 476.4,635.1 477.4,635.0 478.3,634.9 479.3,634.8 480.3,634.7 481.3,634.6 482.3,634.6 483.3,634.5 484.2,634.4 485.2,634.3 486.2,634.2 487.2,634.1 488.2,634.0 489.1,633.9 490.1,633.8 491.1,633.7 492.1,633.6 493.1,633.5 494.1,633.4 495.0,633.3 496.0,633.2 497.0,633.1 498.0,632.9 499.0,632.8 500.0,632.7 500.9,632.6 501.9,632.5 502.9,632.4 503.9,632.3 504.9,632.1 505.8,632.0 506.8,631.9 507.8,631.8 508.8,631.6 509.8,631.5 510.8,631.4 511.7,631.3 512.7,631.1 513.7,631.0 514.7,630.9 515.7,630.7 516.6,630.6 517.6,630.4 518.6,630.3 519.6,630.1 520.6,630.0 521.6,629.8 522.5,629.6 523.5,629.5 524.5,629.3 525.5,629.1 526.5,628.9 527.5,628.8 528.4,628.6 529.4,628.4 530.4,628.2 531.4,628.0 532.4,627.9 533.3,627.7 534.3,627.5 535.3,627.3 536.3,627.1 537.3,626.9 538.3,626.8 539.2,626.6 540.2,626.4 541.2,626.3 542.2,626.1 543.2,625.9 544.2,625.8 545.1,625.6 546.1,625.4 547.1,625.2 548.1,625.0 549.1,624.8 550.0,624.6 551.0,624.4 552.0,624.1 553.0,623.9 554.0,623.7 555.0,623.4 555.9,623.2 556.9,622.9 557.9,622.7 558.9,622.4 559.9,622.1 560.9,621.8 561.8,621.5 562.8,621.2 563.8,620.9 564.8,620.5 565.8,620.2 566.7,619.8 567.7,619.4 568.7,619.0 569.7,618.6 570.7,618.1 571.7,617.6 572.6,617.1 573.6,616.5 574.6,615.8 575.6,615.0 576.6,614.1 577.6,613.0 578.5,611.8 579.5,610.3 580.5,608.3 581.5,605.5 582.5,600.1 583.4,591.7 584.4,581.4 585.4,570.5 586.4,556.8 587.4,541.2 588.4,524.0 589.3,506.0 590.3,490.6 591.3,476.6 592.3,463.6 593.3,451.2 594.3,439.6 595.2,429.0 596.2,417.5 597.2,403.7 598.2,390.6 599.2,380.9 600.1,372.9 601.1,366.8 602.1,361.5 603.1,356.9 604.1,353.1 605.1,350.5 606.0,348.9 607.0,347.5 608.0,346.2 609.0,345.0 610.0,344.0 611.0,343.0 611.9,342.2 612.9,341.5 613.9,340.9 614.9,340.3 615.9,339.9 616.8,339.5 617.8,339.2 618.8,338.9 619.8,338.6 620.8,338.3 621.8,338.0 622.7,337.8 623.7,337.5 624.7,337.3 625.7,337.0 626.7,336.8 627.7,336.6 628.6,336.4 629.6,336.2 630.6,336.0 631.6,335.8 632.6,335.6 633.5,335.5 634.5,335.3 635.5,335.2 636.5,335.1 637.5,334.9 638.5,334.8 639.4,334.8 640.4,334.7 641.4,334.6 642.4,334.6 643.4,334.5 644.3,334.5 645.3,334.5 646.3,334.5 647.3,334.5 648.3,334.5 649.3,334.5 650.2,334.5 651.2,334.5 652.2,334.5 653.2,334.6 654.2,334.6 655.2,334.6 656.1,334.6 657.1,334.6 658.1,334.6 659.1,334.7 660.1,334.7 661.0,334.7 662.0,334.7 663.0,334.7 664.0,334.8 665.0,334.8 666.0,334.8 666.9,334.8 667.9,334.9 668.9,334.9 669.9,334.9 670.9,335.0 671.9,335.0 672.8,335.0 673.8,335.1 674.8,335.1 675.8,335.1 676.8,335.2 677.7,335.2 678.7,335.2 679.7,335.3 680.7,335.3 681.7,335.3 682.7,335.4 683.6,335.4 684.6,335.5 685.6,335.5 686.6,335.5 687.6,335.6 688.6,335.6 689.5,335.6 690.5,335.7 691.5,335.7 692.5,335.8 693.5,335.8 694.4,335.8 695.4,335.9 696.4,335.9 697.4,335.9 698.4,336.0 699.4,336.0 700.3,336.0 701.3,336.1 702.3,336.1 703.3,336.1 704.3,336.2 705.3,336.2 706.2,336.2 707.2,336.3 708.2,336.3 709.2,336.3 710.2,336.2 711.1,336.2 712.1,336.2 713.1,336.1 714.1,336.1 715.1,336.1 716.1,336.0 717.0,336.0 718.0,336.0 719.0,335.9 720.0,335.9 721.0,335.9 722.0,335.8 722.9,335.8 723.9,335.8 724.9,335.7 725.9,335.7 726.9,335.6 727.8,335.6 728.8,335.6 729.8,335.5 730.8,335.5 731.8,335.5 732.8,335.4 733.7,335.4 734.7,335.3 735.7,335.3 736.7,335.3 737.7,335.2 738.7,335.2 739.6,335.2 740.6,335.1 741.6,335.1 742.6,335.1 743.6,335.0 744.5,335.0 745.5,335.0 746.5,334.9 747.5,334.9 748.5,334.9 749.5,334.8 750.4,334.8 751.4,334.8 752.4,334.8 753.4,334.7 754.4,334.7 755.4,334.7 756.3,334.7 757.3,334.7 758.3,334.6 759.3,334.6 760.3,334.6 761.2,334.6 762.2,334.6 763.2,334.6 764.2,334.5 765.2,334.5 766.2,334.5 767.1,334.5 768.1,334.5 769.1,334.5 770.1,334.5 771.1,334.5 772.1,334.5 773.0,334.5 774.0,334.6 775.0,334.6 776.0,334.7 777.0,334.8 777.9,334.8 778.9,334.9 779.9,335.1 780.9,335.2 781.9,335.3 782.9,335.5 783.8,335.6 784.8,335.8 785.8,336.0 786.8,336.2 787.8,336.4 788.7,336.6 789.7,336.8 790.7,337.0 791.7,337.3 792.7,337.5 793.7,337.8 794.6,338.0 795.6,338.3 796.6,338.6 797.6,338.9 798.6,339.2 799.6,339.5 800.5,339.9 801.5,340.3 802.5,340.9 803.5,341.5 804.5,342.2 805.4,343.0 806.4,344.0 807.4,345.0 808.4,346.2 809.4,347.5 810.4,348.9 811.3,350.5 812.3,353.1 813.3,356.9 814.3,361.5 815.3,366.8 816.3,372.9 817.2,380.9 818.2,390.6 819.2,403.7 820.2,417.5 821.2,429.0 822.1,439.6 823.1,451.2 824.1,463.6 825.1,476.6 826.1,490.6 827.1,506.0 828.0,524.0 829.0,541.2 830.0,556.8 831.0,570.5 832.0,581.4 833.0,591.7 833.9,600.1 834.9,605.5 835.9,608.3 836.9,610.3 837.9,611.8 838.8,613.0 839.8,614.1 840.8,615.0 841.8,615.8 842.8,616.5 843.8,617.1 844.7,617.6 845.7,618.1 846.7,618.6 847.7,619.0 848.7,619.4 849.7,619.8 850.6,620.2 851.6,620.5 852.6,620.9 853.6,621.2 854.6,621.5 855.5,621.8 856.5,622.1 857.5,622.4 858.5,622.7 859.5,622.9 860.5,623.2 861.4,623.4 862.4,623.7 863.4,623.9 864.4,624.1 865.4,624.4 866.4,624.6 867.3,624.8 868.3,625.0 869.3,625.2 870.3,625.4 871.3,625.6 872.2,625.8 873.2,625.9 874.2,626.1 875.2,626.3 876.2,626.4 877.2,626.6 878.1,626.8 879.1,626.9 880.1,627.1 881.1,627.3 882.1,627.5 883.1,627.7 884.0,627.9 885.0,628.0 886.0,628.2 887.0,628.4 888.0,628.6 888.9,628.8 889.9,628.9 890.9,629.1 891.9,629.3 892.9,629.5 893.9,629.6 894.8,629.8 895.8,630.0 896.8,630.1 897.8,630.3 898.8,630.4 899.8,630.6 900.7,630.7 901.7,630.9 902.7,631.0 903.7,631.1 904.7,631.3 905.6,631.4 906.6,631.5 907.6,631.6 908.6,631.8 909.6,631.9 910.6,632.0 911.5,632.1 912.5,632.3 913.5,632.4 914.5,632.5 915.5,632.6 916.4,632.7 917.4,632.8 918.4,632.9 919.4,633.1 920.4,633.2 921.4,633.3 922.3,633.4 923.3,633.5 924.3,633.6 925.3,633.7 926.3,633.8 927.3,633.9 928.2,634.0 929.2,634.1 930.2,634.2 931.2,634.3 932.2,634.4 933.1,634.5 934.1,634.6 935.1,634.6 936.1,634.7 937.1,634.8 938.1,634.9 939.0,635.0 940.0,635.1 941.0,635.2 942.0,635.2 943.0,635.3 944.0,635.4 944.9,635.5 945.9,635.6 946.9,635.6 947.9,635.7 948.9,635.8 949.8,635.9 950.8,635.9 951.8,636.0 952.8,636.1 953.8,636.1"/>
<polyline fill="none" stroke="#e27474" stroke-width="1.5" stroke-linejoin="round" points="462.6,636.0 463.6,635.9 464.6,635.8 465.6,635.8 466.6,635.7 467.5,635.6 468.5,635.5 469.5,635.4 470.5,635.3 471.5,635.2 472.4,635.1 473.4,635.1 474.4,635.0 475.4,634.9 476.4,634.8 477.4,634.7 478.3,634.6 479.3,634.5 480.3,634.4 481.3,634.3 482.3,634.2 483.3,634.1 484.2,634.0 485.2,633.9 486.2,633.8 487.2,633.7 488.2,633.6 489.1,633.5 490.1,633.4 491.1,633.3 492.1,633.2 493.1,633.1 494.1,633.0 495.0,632.9 496.0,632.8 497.0,632.7 498.0,632.6 499.0,632.5 500.0,632.4 500.9,632.2 501.9,632.1 502.9,632.0 503.9,631.9 504.9,631.8 505.8,631.7 506.8,631.6 507.8,631.4 508.8,631.3 509.8,631.2 510.8,631.0 511.7,630.9 512.7,630.8 513.7,630.6 514.7,630.5 515.7,630.4 516.6,630.2 517.6,630.1 518.6,629.9 519.6,629.8 520.6,629.6 521.6,629.4 522.5,629.2 523.5,629.1 524.5,628.9 525.5,628.7 526.5,628.5 527.5,628.3 528.4,628.1 529.4,627.9 530.4,627.7 531.4,627.5 532.4,627.3 533.3,627.1 534.3,626.9 535.3,626.6 536.3,626.4 537.3,626.2 538.3,626.0 539.2,625.8 540.2,625.6 541.2,625.4 542.2,625.2 543.2,625.0 544.2,624.7 545.1,624.5 546.1,624.3 547.1,624.0 548.1,623.8 549.1,623.5 550.0,623.2 551.0,622.9 552.0,622.6 553.0,622.3 554.0,621.9 555.0,621.6 555.9,621.2 556.9,620.8 557.9,620.4 558.9,620.0 559.9,619.5 560.9,619.0 561.8,618.5 562.8,618.0 563.8,617.4 564.8,616.9 565.8,616.3 566.7,615.6 567.7,615.0 568.7,614.3 569.7,613.6 570.7,612.7 571.7,611.7 572.6,610.5 573.6,609.1 574.6,607.4 575.6,604.5 576.6,598.9 577.6,591.4 578.5,583.1 579.5,575.1 580.5,567.8 581.5,560.7 582.5,553.1 583.4,544.2 584.4,532.5 585.4,516.6 586.4,501.9 587.4,491.9 588.4,483.6 589.3,475.3 590.3,466.6 591.3,457.9 592.3,449.5 593.3,441.9 594.3,435.2 595.2,430.0 596.2,426.5 597.2,424.5 598.2,422.9 599.2,421.7 600.1,420.6 601.1,419.7 602.1,418.9 603.1,418.1 604.1,417.3 605.1,416.6 606.0,415.9 607.0,415.3 608.0,414.6 609.0,414.0 610.0,413.5 611.0,413.0 611.9,412.5 612.9,412.0 613.9,411.6 614.9,411.2 615.9,410.9 616.8,410.6 617.8,410.3 618.8,410.1 619.8,409.8 620.8,409.5 621.8,409.3 622.7,409.0 623.7,408.8 624.7,408.6 625.7,408.4 626.7,408.1 627.7,407.9 628.6,407.7 629.6,407.5 630.6,407.3 631.6,407.2 632.6,407.0 633.5,406.8 634.5,406.7 635.5,406.5 636.5,406.4 637.5,406.3 638.5,406.1 639.4,406.0 640.4,405.9 641.4,405.8 642.4,405.8 643.4,405.7 644.3,405.6 645.3,405.6 646.3,405.5 647.3,405.5 648.3,405.5 649.3,405.4 650.2,405.4 651.2,405.3 652.2,405.3 653.2,405.3 654.2,405.2 655.2,405.2 656.1,405.2 657.1,405.1 658.1,405.1 659.1,405.1 660.1,405.1 661.0,405.0 662.0,405.0 663.0,405.0 664.0,405.0 665.0,404.9 666.0,404.9 666.9,404.9 667.9,404.9 668.9,404.8 669.9,404.8 670.9,404.8 671.9,404.8 672.8,404.8 673.8,404.7 674.8,404.7 675.8,404.7 676.8,404.7 677.7,404.7 678.7,404.7 679.7,404.6 680.7,404.6 681.7,404.6 682.7,404.6 683.6,404.6 684.6,404.6 685.6,404.5 686.6,404.5 687.6,404.5 688.6,404.5 689.5,404.5 690.5,404.5 691.5,404.5 692.5,404.4 693.5,404.4 694.4,404.4 695.4,404.4 696.4,404.4 697.4,404.4 698.4,404.3 699.4,404.3 700.3,404.3 701.3,404.3 702.3,404.3 703.3,404.2 704.3,404.2 705.3,404.2 706.2,404.2 707.2,404.2 708.2,404.1 709.2,404.2 710.2,404.2 711.1,404.2 712.1,404.2 713.1,404.2 714.1,404.3 715.1,404.3 716.1,404.3 717.0,404.3 718.0,404.3 719.0,404.4 720.0,404.4 721.0,404.4 722.0,404.4 722.9,404.4 723.9,404.4 724.9,404.5 725.9,404.5 726.9,404.5 727.8,404.5 728.8,404.5 729.8,404.5 730.8,404.5 731.8,404.6 732.8,404.6 733.7,404.6 734.7,404.6 735.7,404.6 736.7,404.6 737.7,404.7 738.7,404.7 739.6,404.7 740.6,404.7 741.6,404.7 742.6,404.7 743.6,404.8 744.5,404.8 745.5,404.8 746.5,404.8 747.5,404.8 748.5,404.9 749.5,404.9 750.4,404.9 751.4,404.9 752.4,405.0 753.4,405.0 754.4,405.0 755.4,405.0 756.3,405.1 757.3,405.1 758.3,405.1 759.3,405.1 760.3,405.2 761.2,405.2 762.2,405.2 763.2,405.3 764.2,405.3 765.2,405.3 766.2,405.4 767.1,405.4 768.1,405.5 769.1,405.5 770.1,405.5 771.1,405.6 772.1,405.6 773.0,405.7 774.0,405.8 775.0,405.8 776.0,405.9 777.0,406.0 777.9,406.1 778.9,406.3 779.9,406.4 780.9,406.5 781.9,406.7 782.9,406.8 783.8,407.0 784.8,407.2 785.8,407.3 786.8,407.5 787.8,407.7 788.7,407.9 789.7,408.1 790.7,408.4 791.7,408.6 792.7,408.8 793.7,409.0 794.6,409.3 795.6,409.5 796.6,409.8 797.6,410.1 798.6,410.3 799.6,410.6 800.5,410.9 801.5,411.2 802.5,411.6 803.5,412.0 804.5,412.5 805.4,413.0 806.4,413.5 807.4,414.0 808.4,414.6 809.4,415.3 810.4,415.9 811.3,416.6 812.3,417.3 813.3,418.1 814.3,418.9 815.3,419.7 816.3,420.6 817.2,421.7 818.2,422.9 819.2,424.5 820.2,426.5 821.2,430.0 822.1,435.2 823.1,441.9 824.1,449.5 825.1,457.9 826.1,466.6 827.1,475.3 828.0,483.6 829.0,491.9 830.0,501.9 831.0,516.6 832.0,532.5 833.0,544.2 833.9,553.1 834.9,560.7 835.9,567.8 836.9,575.1 837.9,583.1 838.8,591.4 839.8,598.9 840.8,604.5 841.8,607.4 842.8,609.1 843.8,610.5 844.7,611.7 845.7,612.7 846.7,613.6 847.7,614.3 848.7,615.0 849.7,615.6 850.6,616.3 851.6,616.9 852.6,617.4 853.6,618.0 854.6,618.5 855.5,619.0 856.5,619.5 857.5,620.0 858.5,620.4 859.5,620.8 860.5,621.2 861.4,621.6 862.4,621.9 863.4,622.3 864.4,622.6 865.4,622.9 866.4,623.2 867.3,623.5 868.3,623.8 869.3,624.0 870.3,624.3 871.3,624.5 872.2,624.7 873.2,625.0 874.2,625.2 875.2,625.4 876.2,625.6 877.2,625.8 878.1,626.0 879.1,626.2 880.1,626.4 881.1,626.6 882.1,626.9 883.1,627.1 884.0,627.3 885.0,627.5 886.0,627.7 887.0,627.9 888.0,628.1 888.9,628.3 889.9,628.5 890.9,628.7 891.9,628.9 892.9,629.1 893.9,629.2 894.8,629.4 895.8,629.6 896.8,629.8 897.8,629.9 898.8,630.1 899.8,630.2 900.7,630.4 901.7,630.5 902.7,630.6 903.7,630.8 904.7,630.9 905.6,631.0 906.6,631.2 907.6,631.3 908.6,631.4 909.6,631.6 910.6,631.7 911.5,631.8 912.5,631.9 913.5,632.0 914.5,632.1 915.5,632.2 916.4,632.4 917.4,632.5 918.4,632.6 919.4,632.7 920.4,632.8 921.4,632.9 922.3,633.0 923.3,633.1 924.3,633.2 925.3,633.3 926.3,633.4 927.3,633.5 928.2,633.6 929.2,633.7 930.2,633.8 931.2,633.9 932.2,634.0 933.1,634.1 934.1,634.2 935.1,634.3 936.1,634.4 937.1,634.5 938.1,634.6 939.0,634.7 940.0,634.8 941.0,634.9 942.0,635.0 943.0,635.1 944.0,635.1 944.9,635.2 945.9,635.3 946.9,635.4 947.9,635.5 948.9,635.6 949.8,635.7 950.8,635.8 951.8,635.8 952.8,635.9 953.8,636.0"/>
<polyline fill="none" stroke="#2ca39e" stroke-width="1.5" stroke-linejoin="round" points="462.6,636.0 463.6,635.9 464.6,635.8 465.6,635.8 466.6,635.7 467.5,635.6 468.5,635.5 469.5,635.4 470.5,635.3 471.5,635.2 472.4,635.1 473.4,635.1 474.4,635.0 475.4,634.9 476.4,634.8 477.4,634.7 478.3,634.6 479.3,634.5 480.3,634.4 481.3,634.3 482.3,634.2 483.3,634.1 484.2,634.0 485.2,633.9 486.2,633.8 487.2,633.7 488.2,633.6 489.1,633.5 490.1,633.4 491.1,633.3 492.1,633.2 493.1,633.1 494.1,633.0 495.0,632.9 496.0,632.8 497.0,632.7 498.0,632.6 499.0,632.5 500.0,632.4 500.9,632.3 501.9,632.2 502.9,632.0 503.9,631.9 504.9,631.8 505.8,631.7 506.8,631.6 507.8,631.5 508.8,631.3 509.8,631.2 510.8,631.1 511.7,630.9 512.7,630.8 513.7,630.7 514.7,630.5 515.7,630.4 516.6,630.2 517.6,630.1 518.6,629.9 519.6,629.7 520.6,629.6 521.6,629.4 522.5,629.2 523.5,629.0 524.5,628.8 525.5,628.6 526.5,628.4 527.5,628.1 528.4,627.9 529.4,627.7 530.4,627.5 531.4,627.2 532.4,627.0 533.3,626.8 534.3,626.6 535.3,626.3 536.3,626.1 537.3,625.9 538.3,625.6 539.2,625.4 540.2,625.2 541.2,624.9 542.2,624.7 543.2,624.5 544.2,624.2 545.1,624.0 546.1,623.7 547.1,623.4 548.1,623.1 549.1,622.8 550.0,622.5 551.0,622.2 552.0,621.8 553.0,621.5 554.0,621.2 555.0,620.9 555.9,620.5 556.9,620.1 557.9,619.7 558.9,619.2 559.9,618.6 560.9,618.0 561.8,617.3 562.8,616.5 563.8,615.6 564.8,613.9 565.8,611.3 566.7,608.0 567.7,604.4 568.7,600.2 569.7,595.1 570.7,589.5 571.7,583.6 572.6,577.7 573.6,572.2 574.6,566.6 575.6,560.7 576.6,554.9 577.6,549.4 578.5,544.4 579.5,540.3 580.5,537.2 581.5,534.6 582.5,532.1 583.4,529.3 584.4,526.0 585.4,523.0 586.4,521.2 587.4,520.0 588.4,519.0 589.3,518.0 590.3,517.2 591.3,516.5 592.3,515.9 593.3,515.4 594.3,514.9 595.2,514.6 596.2,514.3 597.2,514.0 598.2,513.8 599.2,513.5 600.1,513.3 601.1,513.1 602.1,512.9 603.1,512.6 604.1,512.4 605.1,512.2 606.0,512.0 607.0,511.9 608.0,511.7 609.0,511.5 610.0,511.3 611.0,511.2 611.9,511.0 612.9,510.9 613.9,510.7 614.9,510.6 615.9,510.5 616.8,510.3 617.8,510.2 618.8,510.1 619.8,510.0 620.8,509.9 621.8,509.8 622.7,509.7 623.7,509.6 624.7,509.5 625.7,509.4 626.7,509.3 627.7,509.2 628.6,509.1 629.6,509.0 630.6,508.9 631.6,508.8 632.6,508.7 633.5,508.7 634.5,508.6 635.5,508.5 636.5,508.4 637.5,508.3 638.5,508.3 639.4,508.2 640.4,508.1 641.4,508.0 642.4,507.9 643.4,507.8 644.3,507.8 645.3,507.7 646.3,507.6 647.3,507.5 648.3,507.4 649.3,507.3 650.2,507.3 651.2,507.2 652.2,507.1 653.2,507.0 654.2,507.0 655.2,506.9 656.1,506.8 657.1,506.7 658.1,506.7 659.1,506.6 660.1,506.5 661.0,506.5 662.0,506.4 663.0,506.4 664.0,506.3 665.0,506.3 666.0,506.2 666.9,506.2 667.9,506.1 668.9,506.1 669.9,506.1 670.9,506.0 671.9,506.0 672.8,506.0 673.8,505.9 674.8,505.9 675.8,505.9 676.8,505.9 677.7,505.9 678.7,505.9 679.7,505.8 680.7,505.8 681.7,505.8 682.7,505.8 683.6,505.8 684.6,505.8 685.6,505.8 686.6,505.8 687.6,505.8 688.6,505.7 689.5,505.7 690.5,505.7 691.5,505.7 692.5,505.7 693.5,505.7 694.4,505.7 695.4,505.7 696.4,505.7 697.4,505.7 698.4,505.7 699.4,505.7 700.3,505.6 701.3,505.6 702.3,505.6 703.3,505.6 704.3,505.6 705.3,505.6 706.2,505.6 707.2,505.6 708.2,505.6 709.2,505.6 710.2,505.6 711.1,505.6 712.1,505.6 713.1,505.6 714.1,505.6 715.1,505.6 716.1,505.6 717.0,505.7 718.0,505.7 719.0,505.7 720.0,505.7 721.0,505.7 722.0,505.7 722.9,505.7 723.9,505.7 724.9,505.7 725.9,505.7 726.9,505.7 727.8,505.7 728.8,505.8 729.8,505.8 730.8,505.8 731.8,505.8 732.8,505.8 733.7,505.8 734.7,505.8 735.7,505.8 736.7,505.8 737.7,505.9 738.7,505.9 739.6,505.9 740.6,505.9 741.6,505.9 742.6,505.9 743.6,506.0 744.5,506.0 745.5,506.0 746.5,506.1 747.5,506.1 748.5,506.1 749.5,506.2 750.4,506.2 751.4,506.3 752.4,506.3 753.4,506.4 754.4,506.4 755.4,506.5 756.3,506.5 757.3,506.6 758.3,506.7 759.3,506.7 760.3,506.8 761.2,506.9 762.2,507.0 763.2,507.0 764.2,507.1 765.2,507.2 766.2,507.3 767.1,507.3 768.1,507.4 769.1,507.5 770.1,507.6 771.1,507.7 772.1,507.8 773.0,507.8 774.0,507.9 775.0,508.0 776.0,508.1 777.0,508.2 777.9,508.3 778.9,508.3 779.9,508.4 780.9,508.5 781.9,508.6 782.9,508.7 783.8,508.7 784.8,508.8 785.8,508.9 786.8,509.0 787.8,509.1 788.7,509.2 789.7,509.3 790.7,509.4 791.7,509.5 792.7,509.6 793.7,509.7 794.6,509.8 795.6,509.9 796.6,510.0 797.6,510.1 798.6,510.2 799.6,510.3 800.5,510.5 801.5,510.6 802.5,510.7 803.5,510.9 804.5,511.0 805.4,511.2 806.4,511.3 807.4,511.5 808.4,511.7 809.4,511.9 810.4,512.0 811.3,512.2 812.3,512.4 813.3,512.6 814.3,512.9 815.3,513.1 816.3,513.3 817.2,513.5 818.2,513.8 819.2,514.0 820.2,514.3 821.2,514.6 822.1,514.9 823.1,515.4 824.1,515.9 825.1,516.5 826.1,517.2 827.1,518.0 828.0,519.0 829.0,520.0 830.0,521.2 831.0,523.0 832.0,526.0 833.0,529.3 833.9,532.1 834.9,534.6 835.9,537.2 836.9,540.3 837.9,544.4 838.8,549.4 839.8,554.9 840.8,560.7 841.8,566.6 842.8,572.2 843.8,577.7 844.7,583.6 845.7,589.5 846.7,595.1 847.7,600.2 848.7,604.4 849.7,608.0 850.6,611.3 851.6,613.9 852.6,615.6 853.6,616.5 854.6,617.3 855.5,618.0 856.5,618.6 857.5,619.2 858.5,619.7 859.5,620.1 860.5,620.5 861.4,620.9 862.4,621.2 863.4,621.5 864.4,621.8 865.4,622.2 866.4,622.5 867.3,622.8 868.3,623.1 869.3,623.4 870.3,623.7 871.3,624.0 872.2,624.2 873.2,624.5 874.2,624.7 875.2,624.9 876.2,625.2 877.2,625.4 878.1,625.6 879.1,625.9 880.1,626.1 881.1,626.3 882.1,626.6 883.1,626.8 884.0,627.0 885.0,627.2 886.0,627.5 887.0,627.7 888.0,627.9 888.9,628.1 889.9,628.4 890.9,628.6 891.9,628.8 892.9,629.0 893.9,629.2 894.8,629.4 895.8,629.6 896.8,629.7 897.8,629.9 898.8,630.1 899.8,630.2 900.7,630.4 901.7,630.5 902.7,630.7 903.7,630.8 904.7,630.9 905.6,631.1 906.6,631.2 907.6,631.3 908.6,631.5 909.6,631.6 910.6,631.7 911.5,631.8 912.5,631.9 913.5,632.0 914.5,632.2 915.5,632.3 916.4,632.4 917.4,632.5 918.4,632.6 919.4,632.7 920.4,632.8 921.4,632.9 922.3,633.0 923.3,633.1 924.3,633.2 925.3,633.3 926.3,633.4 927.3,633.5 928.2,633.6 929.2,633.7 930.2,633.8 931.2,633.9 932.2,634.0 933.1,634.1 934.1,634.2 935.1,634.3 936.1,634.4 937.1,634.5 938.1,634.6 939.0,634.7 940.0,634.8 941.0,634.9 942.0,635.0 943.0,635.1 944.0,635.1 944.9,635.2 945.9,635.3 946.9,635.4 947.9,635.5 948.9,635.6 949.8,635.7 950.8,635.8 951.8,635.8 952.8,635.9 953.8,636.0"/>
<polyline fill="none" stroke="#5454ae" stroke-width="1.5" stroke-linejoin="round" points="451.4,637.7 452.4,637.6 453.4,637.6 454.4,637.5 455.5,637.4 456.5,637.4 457.5,637.3 458.5,637.2 459.6,637.2 460.6,637.1 461.6,637.0 462.7,637.0 463.7,636.9 464.7,636.8 465.7,636.8 466.8,636.7 467.8,636.6 468.8,636.6 469.9,636.5 470.9,636.4 471.9,636.4 472.9,636.3 474.0,636.2 475.0,636.1 476.0,636.1 477.0,636.0 478.1,635.9 479.1,635.9 480.1,635.8 481.2,635.7 482.2,635.6 483.2,635.5 484.2,635.5 485.3,635.4 486.3,635.3 487.3,635.2 488.3,635.2 489.4,635.1 490.4,635.0 491.4,634.9 492.5,634.8 493.5,634.8 494.5,634.7 495.5,634.6 496.6,634.5 497.6,634.4 498.6,634.4 499.6,634.3 500.7,634.2 501.7,634.1 502.7,634.0 503.8,633.9 504.8,633.8 505.8,633.7 506.8,633.7 507.9,633.6 508.9,633.5 509.9,633.4 510.9,633.3 512.0,633.2 513.0,633.1 514.0,633.0 515.1,632.9 516.1,632.8 517.1,632.7 518.1,632.6 519.2,632.5 520.2,632.4 521.2,632.3 522.2,632.1 523.3,632.0 524.3,631.9 525.3,631.8 526.4,631.7 527.4,631.6 528.4,631.4 529.4,631.3 530.5,631.2 531.5,631.0 532.5,630.9 533.5,630.8 534.6,630.6 535.6,630.4 536.6,630.3 537.7,630.1 538.7,629.9 539.7,629.8 540.7,629.6 541.8,629.4 542.8,629.2 543.8,629.0 544.8,628.8 545.9,628.6 546.9,628.3 547.9,628.0 549.0,627.6 550.0,627.2 551.0,626.7 552.0,626.0 553.1,624.7 554.1,623.0 555.1,621.1 556.1,619.0 557.2,616.9 558.2,614.6 559.2,612.0 560.3,609.2 561.3,606.1 562.3,602.4 563.3,598.5 564.4,594.7 565.4,591.0 566.4,587.9 567.5,585.5 568.5,583.2 569.5,581.0 570.5,578.9 571.6,577.1 572.6,575.5 573.6,574.3 574.6,573.4 575.7,572.7 576.7,572.2 577.7,571.7 578.8,571.3 579.8,570.9 580.8,570.6 581.8,570.3 582.9,570.0 583.9,569.7 584.9,569.5 585.9,569.3 587.0,569.0 588.0,568.8 589.0,568.6 590.1,568.5 591.1,568.3 592.1,568.1 593.1,568.0 594.2,567.9 595.2,567.8 596.2,567.6 597.2,567.5 598.3,567.4 599.3,567.3 600.3,567.2 601.4,567.1 602.4,567.0 603.4,567.0 604.4,566.9 605.5,566.8 606.5,566.7 607.5,566.6 608.5,566.5 609.6,566.5 610.6,566.4 611.6,566.3 612.7,566.2 613.7,566.2 614.7,566.1 615.7,566.0 616.8,566.0 617.8,565.9 618.8,565.9 619.8,565.8 620.9,565.7 621.9,565.7 622.9,565.6 624.0,565.6 625.0,565.5 626.0,565.5 627.0,565.4 628.1,565.3 629.1,565.3 630.1,565.2 631.1,565.2 632.2,565.1 633.2,565.1 634.2,565.0 635.3,565.0 636.3,564.9 637.3,564.9 638.3,564.8 639.4,564.7 640.4,564.7 641.4,564.6 642.4,564.6 643.5,564.5 644.5,564.5 645.5,564.4 646.6,564.3 647.6,564.3 648.6,564.2 649.6,564.2 650.7,564.1 651.7,564.0 652.7,564.0 653.7,563.9 654.8,563.9 655.8,563.8 656.8,563.8 657.9,563.7 658.9,563.6 659.9,563.6 660.9,563.5 662.0,563.5 663.0,563.4 664.0,563.4 665.1,563.4 666.1,563.3 667.1,563.3 668.1,563.2 669.2,563.2 670.2,563.2 671.2,563.1 672.2,563.1 673.3,563.1 674.3,563.1 675.3,563.1 676.4,563.0 677.4,563.0 678.4,563.0 679.4,563.0 680.5,563.0 681.5,563.0 682.5,563.0 683.5,562.9 684.6,562.9 685.6,562.9 686.6,562.9 687.7,562.9 688.7,562.9 689.7,562.9 690.7,562.9 691.8,562.9 692.8,562.9 693.8,562.8 694.8,562.8 695.9,562.8 696.9,562.8 697.9,562.8 699.0,562.8 700.0,562.8 701.0,562.8 702.0,562.8 703.1,562.8 704.1,562.8 705.1,562.7 706.1,562.7 707.2,562.7 708.2,562.7 709.2,562.7 710.3,562.7 711.3,562.7 712.3,562.8 713.3,562.8 714.4,562.8 715.4,562.8 716.4,562.8 717.4,562.8 718.5,562.8 719.5,562.8 720.5,562.8 721.6,562.8 722.6,562.8 723.6,562.9 724.6,562.9 725.7,562.9 726.7,562.9 727.7,562.9 728.7,562.9 729.8,562.9 730.8,562.9 731.8,562.9 732.9,562.9 733.9,563.0 734.9,563.0 735.9,563.0 737.0,563.0 738.0,563.0 739.0,563.0 740.0,563.0 741.1,563.1 742.1,563.1 743.1,563.1 744.2,563.1 745.2,563.1 746.2,563.2 747.2,563.2 748.3,563.2 749.3,563.3 750.3,563.3 751.3,563.4 752.4,563.4 753.4,563.4 754.4,563.5 755.5,563.5 756.5,563.6 757.5,563.6 758.5,563.7 759.6,563.8 760.6,563.8 761.6,563.9 762.7,563.9 763.7,564.0 764.7,564.0 765.7,564.1 766.8,564.2 767.8,564.2 768.8,564.3 769.8,564.3 770.9,564.4 771.9,564.5 772.9,564.5 774.0,564.6 775.0,564.6 776.0,564.7 777.0,564.7 778.1,564.8 779.1,564.9 780.1,564.9 781.1,565.0 782.2,565.0 783.2,565.1 784.2,565.1 785.3,565.2 786.3,565.2 787.3,565.3 788.3,565.3 789.4,565.4 790.4,565.5 791.4,565.5 792.4,565.6 793.5,565.6 794.5,565.7 795.5,565.7 796.6,565.8 797.6,565.9 798.6,565.9 799.6,566.0 800.7,566.0 801.7,566.1 802.7,566.2 803.7,566.2 804.8,566.3 805.8,566.4 806.8,566.5 807.9,566.5 808.9,566.6 809.9,566.7 810.9,566.8 812.0,566.9 813.0,567.0 814.0,567.0 815.0,567.1 816.1,567.2 817.1,567.3 818.1,567.4 819.2,567.5 820.2,567.6 821.2,567.8 822.2,567.9 823.3,568.0 824.3,568.1 825.3,568.3 826.3,568.5 827.4,568.6 828.4,568.8 829.4,569.0 830.5,569.3 831.5,569.5 832.5,569.7 833.5,570.0 834.6,570.3 835.6,570.6 836.6,570.9 837.6,571.3 838.7,571.7 839.7,572.2 840.7,572.7 841.8,573.4 842.8,574.3 843.8,575.5 844.8,577.1 845.9,578.9 846.9,581.0 847.9,583.2 848.9,585.5 850.0,587.9 851.0,591.0 852.0,594.7 853.1,598.5 854.1,602.4 855.1,606.1 856.1,609.2 857.2,612.0 858.2,614.6 859.2,616.9 860.3,619.0 861.3,621.1 862.3,623.0 863.3,624.7 864.4,626.0 865.4,626.7 866.4,627.2 867.4,627.6 868.5,628.0 869.5,628.3 870.5,628.6 871.6,628.8 872.6,629.0 873.6,629.2 874.6,629.4 875.7,629.6 876.7,629.8 877.7,629.9 878.7,630.1 879.8,630.3 880.8,630.4 881.8,630.6 882.9,630.8 883.9,630.9 884.9,631.0 885.9,631.2 887.0,631.3 888.0,631.4 889.0,631.6 890.0,631.7 891.1,631.8 892.1,631.9 893.1,632.0 894.2,632.1 895.2,632.3 896.2,632.4 897.2,632.5 898.3,632.6 899.3,632.7 900.3,632.8 901.3,632.9 902.4,633.0 903.4,633.1 904.4,633.2 905.5,633.3 906.5,633.4 907.5,633.5 908.5,633.6 909.6,633.7 910.6,633.7 911.6,633.8 912.6,633.9 913.7,634.0 914.7,634.1 915.7,634.2 916.8,634.3 917.8,634.4 918.8,634.4 919.8,634.5 920.9,634.6 921.9,634.7 922.9,634.8 923.9,634.8 925.0,634.9 926.0,635.0 927.0,635.1 928.1,635.2 929.1,635.2 930.1,635.3 931.1,635.4 932.2,635.5 933.2,635.5 934.2,635.6 935.2,635.7 936.3,635.8 937.3,635.9 938.3,635.9 939.4,636.0 940.4,636.1 941.4,636.1 942.4,636.2 943.5,636.3 944.5,636.4 945.5,636.4 946.5,636.5 947.6,636.6 948.6,636.6 949.6,636.7 950.7,636.8 951.7,636.8 952.7,636.9 953.7,637.0 954.8,637.0 955.8,637.1 956.8,637.2 957.9,637.2 958.9,637.3 959.9,637.4 960.9,637.4 962.0,637.5 963.0,637.6 964.0,637.6 965.0,637.7"/>
<rect x="430.8" y="263" width="2" height="395" fill="#3a3a3a"/>
<rect x="430.8" y="656.3" width="551" height="2" fill="#3a3a3a"/>
</g></svg>
<div class="t" style="left:415.10px;top:638.32px;font-size:11.19px;color:#2a2a2a;font-weight:normal;transform:scaleX(1.0586);-webkit-text-stroke:0.25px #2a2a2a;">0</div>
<div class="t" style="left:415.10px;top:620.47px;font-size:11.19px;color:#2a2a2a;font-weight:normal;transform:scaleX(1.0586);-webkit-text-stroke:0.25px #2a2a2a;">5</div>
<div class="t" style="left:408.40px;top:602.61px;font-size:11.19px;color:#2a2a2a;font-weight:normal;transform:scaleX(1.0680);-webkit-text-stroke:0.25px #2a2a2a;">10</div>
<div class="t" style="left:408.40px;top:584.75px;font-size:11.19px;color:#2a2a2a;font-weight:normal;transform:scaleX(1.0680);-webkit-text-stroke:0.25px #2a2a2a;">15</div>
<div class="t" style="left:408.40px;top:566.90px;font-size:11.19px;color:#2a2a2a;font-weight:normal;transform:scaleX(1.0680);-webkit-text-stroke:0.25px #2a2a2a;">20</div>
<div class="t" style="left:408.40px;top:549.04px;font-size:11.19px;color:#2a2a2a;font-weight:normal;transform:scaleX(1.0680);-webkit-text-stroke:0.25px #2a2a2a;">25</div>
<div class="t" style="left:408.40px;top:531.18px;font-size:11.19px;color:#2a2a2a;font-weight:normal;transform:scaleX(1.0680);-webkit-text-stroke:0.25px #2a2a2a;">30</div>
<div class="t" style="left:408.40px;top:513.32px;font-size:11.19px;color:#2a2a2a;font-weight:normal;transform:scaleX(1.0680);-webkit-text-stroke:0.25px #2a2a2a;">35</div>
<div class="t" style="left:408.40px;top:495.47px;font-size:11.19px;color:#2a2a2a;font-weight:normal;transform:scaleX(1.0680);-webkit-text-stroke:0.25px #2a2a2a;">40</div>
<div class="t" style="left:408.40px;top:477.61px;font-size:11.19px;color:#2a2a2a;font-weight:normal;transform:scaleX(1.0680);-webkit-text-stroke:0.25px #2a2a2a;">45</div>
<div class="t" style="left:408.40px;top:459.75px;font-size:11.19px;color:#2a2a2a;font-weight:normal;transform:scaleX(1.0680);-webkit-text-stroke:0.25px #2a2a2a;">50</div>
<div class="t" style="left:408.40px;top:441.90px;font-size:11.19px;color:#2a2a2a;font-weight:normal;transform:scaleX(1.0680);-webkit-text-stroke:0.25px #2a2a2a;">55</div>
<div class="t" style="left:408.40px;top:424.04px;font-size:11.19px;color:#2a2a2a;font-weight:normal;transform:scaleX(1.0680);-webkit-text-stroke:0.25px #2a2a2a;">60</div>
<div class="t" style="left:408.40px;top:406.18px;font-size:11.19px;color:#2a2a2a;font-weight:normal;transform:scaleX(1.0680);-webkit-text-stroke:0.25px #2a2a2a;">65</div>
<div class="t" style="left:408.40px;top:388.33px;font-size:11.19px;color:#2a2a2a;font-weight:normal;transform:scaleX(1.0680);-webkit-text-stroke:0.25px #2a2a2a;">70</div>
<div class="t" style="left:408.40px;top:370.47px;font-size:11.19px;color:#2a2a2a;font-weight:normal;transform:scaleX(1.0680);-webkit-text-stroke:0.25px #2a2a2a;">75</div>
<div class="t" style="left:408.40px;top:352.61px;font-size:11.19px;color:#2a2a2a;font-weight:normal;transform:scaleX(1.0680);-webkit-text-stroke:0.25px #2a2a2a;">80</div>
<div class="t" style="left:408.40px;top:334.75px;font-size:11.19px;color:#2a2a2a;font-weight:normal;transform:scaleX(1.0680);-webkit-text-stroke:0.25px #2a2a2a;">85</div>
<div class="t" style="left:408.40px;top:316.90px;font-size:11.19px;color:#2a2a2a;font-weight:normal;transform:scaleX(1.0680);-webkit-text-stroke:0.25px #2a2a2a;">90</div>
<div class="t" style="left:408.40px;top:299.04px;font-size:11.19px;color:#2a2a2a;font-weight:normal;transform:scaleX(1.0680);-webkit-text-stroke:0.25px #2a2a2a;">95</div>
<div class="t" style="left:401.80px;top:281.18px;font-size:11.19px;color:#2a2a2a;font-weight:normal;transform:scaleX(1.0658);-webkit-text-stroke:0.25px #2a2a2a;">100</div>
<div class="t" style="left:401.80px;top:263.33px;font-size:11.19px;color:#2a2a2a;font-weight:normal;transform:scaleX(1.0658);-webkit-text-stroke:0.25px #2a2a2a;">105</div>
<div class="t" style="left:473.90px;top:665.92px;font-size:11.19px;color:#2a2a2a;font-weight:normal;transform:scaleX(1.0512);-webkit-text-stroke:0.25px #2a2a2a;">-10</div>
<div class="t" style="left:588.40px;top:665.92px;font-size:11.19px;color:#2a2a2a;font-weight:normal;transform:scaleX(1.3363);-webkit-text-stroke:0.25px #2a2a2a;">-5</div>
<div class="t" style="left:704.90px;top:665.92px;font-size:11.19px;color:#2a2a2a;font-weight:normal;transform:scaleX(1.0586);-webkit-text-stroke:0.25px #2a2a2a;">0</div>
<div class="t" style="left:817.55px;top:665.92px;font-size:11.19px;color:#2a2a2a;font-weight:normal;transform:scaleX(1.0586);-webkit-text-stroke:0.25px #2a2a2a;">5</div>
<div class="t" style="left:926.85px;top:665.92px;font-size:11.19px;color:#2a2a2a;font-weight:normal;transform:scaleX(1.0680);-webkit-text-stroke:0.25px #2a2a2a;">10</div>
<div class="t" style="left:668.50px;top:680.51px;font-size:11.92px;color:#2a2a2a;font-weight:normal;transform:scaleX(1.0757);-webkit-text-stroke:0.15px #2a2a2a;">Distance (cm)</div>
<div class="t" style="left:336.25px;top:453.5px;width:104.5px;height:12px;font-size:12px;color:#2a2a2a;transform:rotate(-90deg);transform-origin:52.25px 6px;text-align:center;letter-spacing:0.35px;-webkit-text-stroke:0.15px #2a2a2a;">Relative Dose (%)</div>
<svg style="position:absolute;left:0;top:0" width="1024" height="768">
<defs>
<linearGradient id="gGear" x1="0" y1="0" x2="0" y2="1"><stop offset="0" stop-color="#dfe6ee"/><stop offset="1" stop-color="#8ea0b4"/></linearGradient>
<linearGradient id="gPurp" x1="0" y1="0" x2="0" y2="1"><stop offset="0" stop-color="#f4d0f0"/><stop offset="1" stop-color="#9a3aa8"/></linearGradient>
<radialGradient id="gBall1" cx="0.35" cy="0.35" r="0.7"><stop offset="0" stop-color="#e8f0f8"/><stop offset="1" stop-color="#50606e"/></radialGradient>
<radialGradient id="gBall2" cx="0.35" cy="0.35" r="0.7"><stop offset="0" stop-color="#f0d0d8"/><stop offset="1" stop-color="#7a2838"/></radialGradient>
<radialGradient id="gBall3" cx="0.35" cy="0.35" r="0.7"><stop offset="0" stop-color="#ffd0d0"/><stop offset="1" stop-color="#b00010"/></radialGradient>
<linearGradient id="gCard" x1="0" y1="0" x2="0" y2="1"><stop offset="0" stop-color="#e8f4fc"/><stop offset="1" stop-color="#a8d0ee"/></linearGradient>
<linearGradient id="gCardF" x1="0" y1="0" x2="0" y2="1"><stop offset="0" stop-color="#7ab8e8"/><stop offset="1" stop-color="#c8e4f8"/></linearGradient>
<pattern id="pGrid" width="3" height="3" patternUnits="userSpaceOnUse"><rect width="3" height="3" fill="#eef7fb"/><path d="M0,0.5H3M0.5,0V3" stroke="#cfe6ee" stroke-width="0.6"/></pattern>
<marker id="aB" markerWidth="4" markerHeight="4" refX="2.5" refY="2" orient="auto" markerUnits="userSpaceOnUse"><path d="M0,0 L4,2 L0,4 Z" fill="#3a58b8"/></marker>
</defs>
<path d="M70.34,76.57 L72.40,78.48 L71.23,80.81 L68.47,80.29 L66.96,81.58 L67.07,84.39 L64.59,85.21 L63.01,82.89 L61.03,82.74 L59.12,84.80 L56.79,83.63 L57.31,80.87 L56.02,79.36 L53.21,79.47 L52.39,76.99 L54.71,75.41 L54.86,73.43 L52.80,71.52 L53.97,69.19 L56.73,69.71 L58.24,68.42 L58.13,65.61 L60.61,64.79 L62.19,67.11 L64.17,67.26 L66.08,65.20 L68.41,66.37 L67.89,69.13 L69.18,70.64 L71.99,70.53 L72.81,73.01 L70.49,74.59 Z" fill="url(#gGear)" stroke="#56606c" stroke-width="1.2"/>
<circle cx="62.6" cy="75" r="3.9" fill="#f4f8fc" stroke="#5e6a78" stroke-width="0.8"/><circle cx="61.9" cy="75.6" r="1.8" fill="#404a56"/>
<path d="M81.47,71.04 L82.73,73.32 L81.01,75.11 L78.69,73.93 L76.94,74.69 L76.22,77.20 L73.74,77.24 L72.93,74.77 L71.16,74.07 L68.88,75.33 L67.09,73.61 L68.27,71.29 L67.51,69.54 L65.00,68.82 L64.96,66.34 L67.43,65.53 L68.13,63.76 L66.87,61.48 L68.59,59.69 L70.91,60.87 L72.66,60.11 L73.38,57.60 L75.86,57.56 L76.67,60.03 L78.44,60.73 L80.72,59.47 L82.51,61.19 L81.33,63.51 L82.09,65.26 L84.60,65.98 L84.64,68.46 L82.17,69.27 Z" fill="url(#gGear)" stroke="#56606c" stroke-width="1.2"/>
<circle cx="74.8" cy="67.4" r="3.7" fill="#f4f8fc" stroke="#5e6a78" stroke-width="0.8"/><circle cx="74.2" cy="68" r="1.7" fill="#404a56"/>
<path d="M89.8,80.3 L95.6,80.3 L92.7,83.4 Z" fill="#1a2aa0"/>
<path d="M134.7,59.9 L128.5,78.3 L138.8,82.8 Z" fill="url(#gPurp)" stroke="#2a1a2a" stroke-width="1.4" stroke-linejoin="round"/>
<path d="M154.2,59.9 L160.3,78.3 L150.1,82.8 Z" fill="url(#gPurp)" stroke="#2a1a2a" stroke-width="1.4" stroke-linejoin="round"/>
<rect x="143.6" y="55.8" width="2.2" height="31.7" fill="#f0287a"/>
<path d="M137,59.9 H152" stroke="#4a60c0" stroke-width="1.5"/><path d="M136,59.9 l3,-2.5 v5 z M153,59.9 l-3,-2.5 v5 z" fill="#4a60c0"/>
<path d="M140,84.1 H149" stroke="#4a60c0" stroke-width="1.5"/><path d="M139,84.1 l3,-2.5 v5 z M150,84.1 l-3,-2.5 v5 z" fill="#4a60c0"/>
<path d="M180.7,81 L185.7,81 L183.2,83.3 Z" fill="#808088"/>
<path d="M208.3,84.2 C212,83.8 213.2,81 213.2,77 L213.5,66.5 C213.8,63.5 216,62.8 219.4,62.8" fill="none" stroke="#d83040" stroke-width="1.8"/>
<path d="M207,71 H230" stroke="#3a58b8" stroke-width="1.6"/><path d="M204.6,71 l4,-3 v6 z M232.2,71 l-4,-3 v6 z" fill="#3a58b8"/>
<rect x="217.4" y="55.8" width="1.9" height="31.6" fill="#303030"/>
<text x="220" y="87.2" font-family="Liberation Sans" font-weight="bold" font-size="6.5" fill="#202020">0,0</text>
<path d="M244.6,81 L249,81 L246.8,83.2 Z" fill="#808088"/>
<path d="M279.5,56.8 V86.3" stroke="#8a8a8a" stroke-width="1.5"/>
<path d="M266.8,59.5 L292.3,85.8 M264.6,81 L294.9,63" stroke="#2e2e2e" stroke-width="1.8"/>
<path d="M289.6,81.5 C293.5,78 294,72 290.5,68.5" fill="none" stroke="#2e2e2e" stroke-width="1.5"/><path d="M289.8,65.6 L290.2,68.8 L293.4,68.4" fill="none" stroke="#2e2e2e" stroke-width="1.4"/>
<path d="M316,87.6 V59.5 M325.7,87.6 V59.5" stroke="#2e2e2e" stroke-width="1.7"/>
<path d="M325.7,87.6 V59.5" stroke="#e83a3a" stroke-width="1.7"/>
<path d="M312.6,60.5 l3.4,-4.2 l3.4,4.2 z" fill="#2e2e2e"/><path d="M322.3,60.5 l3.4,-4.2 l3.4,4.2 z" fill="#e83a3a"/>
<path d="M304.6,67 H334.5" stroke="#e83a3a" stroke-width="1.7"/><path d="M333.5,63.6 l4.2,3.4 l-4.2,3.4 z" fill="#e83a3a"/>
<path d="M304.6,77.5 H334.5" stroke="#2e2e2e" stroke-width="1.7"/><path d="M333.5,74.1 l4.2,3.4 l-4.2,3.4 z" fill="#2e2e2e"/>
<path d="M317.8,75.3 L323.9,69.1" stroke="#4a64c8" stroke-width="1.6" stroke-dasharray="1.6,1"/>
<path d="M352,82.3 C353.5,74 354.5,66 356.3,62.5 C358,61.2 362,61.8 368,62.5 C374,61.8 377.5,61 378.8,61.7 C381,65 382.3,74 383.6,82.8" fill="none" stroke="#f0b82a" stroke-width="2"/>
<path d="M358,72.6 H364.5 M378.3,72.6 H371.8" stroke="#3048b0" stroke-width="2"/><path d="M366.6,72.6 l-3.6,-3.2 v6.4 z M369.8,72.6 l3.6,-3.2 v6.4 z" fill="#3048b0"/>
<rect x="367.2" y="56" width="2" height="31.6" fill="#2e2e2e"/>
<path d="M399.8,78.4 C401.5,77.5 401.6,70 402.4,66.4 L415,65.6 L427.6,66.4 C428.4,70 428.5,77.5 430.2,78.4" fill="none" stroke="#f0b82a" stroke-width="1.8"/>
<path d="M402,78 C406,77.6 408.2,77 408.8,73 L409.6,67.8 L415,67.4 L420.6,67.8 L421.4,73 C422,77 424.2,77.6 428.5,78" fill="none" stroke="#3e5ac0" stroke-width="1.8"/>
<rect x="414.2" y="56" width="2" height="31.6" fill="#2e2e2e"/>
<path d="M402.5,83.2 H408 M422.5,83.2 H428" stroke="#e82a2a" stroke-width="1.5"/><path d="M399.8,83.2 l3,-2.4 v4.8 z M410.6,83.2 l-3,-2.4 v4.8 z M419.8,83.2 l3,-2.4 v4.8 z M430.6,83.2 l-3,-2.4 v4.8 z" fill="#e82a2a"/>
<rect x="455.2" y="55.8" width="32.5" height="31.8" fill="url(#pGrid)"/>
<path d="M455.5,80.4 H460.7 V58.9 H469.9 V68.5 H475.4 V62.3 H483.3 V72.9 H487.4" fill="none" stroke="#f8c040" stroke-width="1.8"/>
<path d="M455.5,81.8 H463.1 V64 H471.3 V71.9 H476.8 V66.7 H484.3 V72.2 H487.4" fill="none" stroke="#ee4aa0" stroke-width="1.8"/>
<path d="M481.5,78 V85" stroke="#2e48b0" stroke-width="1.6"/><path d="M478.4,79 l3.1,-3.6 l3.1,3.6 z M478.4,84 l3.1,3.6 l3.1,-3.6 z" fill="#2e48b0"/>
<path d="M503.8,81 L508.2,81 L506,83.2 Z" fill="#808088"/>
<path d="M542.3,71.7 C541.5,65 547,61.5 551.5,66.5" fill="none" stroke="#2a5ab8" stroke-width="2.4"/><path d="M548.6,67.6 l5.4,-1.4 l-1.4,5.6 z" fill="#2a5ab8"/>
<path d="M569.3,71.7 C570.1,65 564.6,61.5 560.1,66.5" fill="none" stroke="#2a5ab8" stroke-width="2.4"/><path d="M563,67.6 l-5.4,-1.4 l1.4,5.6 z" fill="#2a5ab8"/>
<circle cx="544.1" cy="78.7" r="5.1" fill="url(#gBall1)"/><circle cx="556" cy="78.7" r="5.1" fill="url(#gBall2)"/><circle cx="567.3" cy="78.7" r="5.1" fill="url(#gBall3)"/>
<rect x="602.7" y="55.9" width="33.3" height="31.6" fill="url(#pGrid)"/>
<path d="M603.2,82.8 L613.2,55.9 L625.5,86.9 L635.5,63.5" fill="none" stroke="#6070c0" stroke-width="1.5"/>
<path d="M603,72.9 C606,69 609,67.2 612,67.6 C617,68.5 621,77.5 626.1,77.5 C630,77.5 633,73 636,70.5" fill="none" stroke="#e4409a" stroke-width="2"/>
<rect x="666.2" y="55.5" width="32.8" height="32" fill="#dadadc"/>
<path d="M670,56.5 V86.5 M668,83.6 H699" stroke="#b4b4b8" stroke-width="1"/>
<path d="M670,61 C675,58.5 679,59.5 681.5,61.5 C684.5,64 685,73 688.5,78 C691,80.5 694,81 698.3,81" fill="none" stroke="#8a8a90" stroke-width="1.2"/>
<path d="M670,62.5 C675,60.5 679.5,60.5 682.5,63 C685,66 685.5,75 689.5,79.5 C692,81.8 695,82 698.3,82" fill="none" stroke="#8a8a90" stroke-width="1.1"/>
<path d="M783.4,55.5 V87.5" stroke="#9a9aa0" stroke-width="1.4"/><path d="M778.75,56.25 L789.7,87.5" stroke="#8a8a90" stroke-width="1.2"/>
<path d="M771,61.5 L777.8,58" stroke="#7a7a80" stroke-width="1.3"/><path d="M773.6,56 L778.6,57.6 L775.6,61.6" fill="none" stroke="#7a7a80" stroke-width="1.3"/>
<path d="M796.7,78.9 L790.8,84" stroke="#7a7a80" stroke-width="1.3"/><path d="M790.6,79.4 L790.2,84.6 L795.4,85" fill="none" stroke="#7a7a80" stroke-width="1.3"/>
<rect x="867.6" y="57.6" width="16.4" height="13" rx="1.5" fill="url(#gCard)" stroke="#3a78b8" stroke-width="1"/>
<rect x="864" y="64.6" width="22.3" height="12" rx="1.5" fill="url(#gCard)" stroke="#3a78b8" stroke-width="1"/>
<rect x="860.3" y="71.7" width="19.6" height="15.6" rx="1.8" fill="url(#gCardF)" stroke="#245a94" stroke-width="1.3"/>
<path d="M888.5,57.5 L882.5,63.5" stroke="#3a9a20" stroke-width="4.6" stroke-linecap="round"/><path d="M888.5,57.5 L882.5,63.5" stroke="#68c838" stroke-width="3"/><path d="M877.5,62 L877.8,69.2 L885,69.4 Z" fill="#58b830" stroke="#3a9a20" stroke-width="0.8" stroke-linejoin="round"/>
<circle cx="884" cy="79.9" r="6.6" fill="#d42a2a" stroke="#8a1a1a" stroke-width="0.8"/><path d="M881.2,77.1 L886.8,82.7 M886.8,77.1 L881.2,82.7" stroke="#ffffff" stroke-width="1.8"/>
<rect x="913.6" y="49" width="1.2" height="85" fill="#f6f6f8"/>
<path d="M929.7,84.6 L934.4,84 C936,80 936,60 936.7,56.4 L954.9,56.4 C955.6,60 955.6,80 956.6,84 L960.2,84.6" fill="none" stroke="#f4d22a" stroke-width="1.8"/>
<path d="M930,86.5 L936,85 C937,80 937.2,70 938,66.4 C941,66 944,67 946.5,68 C949,67 951,66 953.5,66.4 C954.3,70 954.5,80 955,85 L960,86.5" fill="none" stroke="#50c050" stroke-width="1.8"/>
<path d="M930,87.3 L937,86.5 C939,84 939,78 940,76.4 C943,76 944,77 946,77.5 C948,77 949,76 952,76.4 C953,78 953,84 955.5,86.5 L960.5,87.3" fill="none" stroke="#4a6ed0" stroke-width="1.8"/>
<path d="M945.5,58.8 V77.5" stroke="#f03070" stroke-width="1.5"/><path d="M942.8,62 l2.7,3.6 l2.7,-3.6 z M942.8,70.5 l2.7,-3.6 l2.7,3.6 z" fill="#f03070"/>
</svg>
<svg style="position:absolute;left:0;top:0" width="1024" height="768">
<defs><pattern id="pGrip" width="2" height="2" patternUnits="userSpaceOnUse"><rect width="2" height="2" fill="#efeff1"/><rect width="1" height="1" fill="#b8b8bc"/><rect x="1" y="1" width="1" height="1" fill="#d8d8dc"/></pattern><radialGradient id="gOr" cx="0.4" cy="0.4" r="0.7"><stop offset="0" stop-color="#fff0a0"/><stop offset="1" stop-color="#e89a10"/></radialGradient><linearGradient id="gStk" x1="0" y1="0" x2="0" y2="1"><stop offset="0" stop-color="#e8f6ff"/><stop offset="1" stop-color="#8cc4ee"/></linearGradient></defs>
<rect x="355" y="185.5" width="6" height="21" fill="url(#pGrip)"/>
<path d="M365.4,189.2 C367.4,187.6 371.4,188.2 373.09999999999997,189.8 L369.09999999999997,197.5 C368.09999999999997,199.5 367.09999999999997,201.5 365.7,203 C366.29999999999995,200 367.5,197 366.9,194 C366.5,192 365.09999999999997,190.6 365.4,189.2 Z" fill="#b8cce0" stroke="#2a3858" stroke-width="1.7" stroke-linejoin="round"/><path d="M367.5,190.4 L368.5,195.5" stroke="#f4faff" stroke-width="1.2"/>
<circle cx="375.2" cy="192.9" r="3.8" fill="url(#gOr)"/>
<path d="M476.3,189.0 C478.3,187.4 482.3,188.0 484.0,189.60000000000002 L480.0,197.3 C479.0,199.3 478.0,201.3 476.6,202.8 C477.2,199.8 478.40000000000003,196.8 477.8,193.8 C477.40000000000003,191.8 476.0,190.4 476.3,189.0 Z" fill="#b8cce0" stroke="#2a3858" stroke-width="1.7" stroke-linejoin="round"/><path d="M478.40000000000003,190.20000000000002 L479.40000000000003,195.3" stroke="#f4faff" stroke-width="1.2"/>
<path d="M481.5,202 L489,194.5" stroke="#8a6a10" stroke-width="3.6" stroke-linecap="round"/><path d="M481.5,202 L489,194.5" stroke="#f4d020" stroke-width="2.4" stroke-linecap="butt"/><path d="M488.2,195.3 L490,193.5" stroke="#d04040" stroke-width="2.6"/>
<rect x="63.40" y="245.60" width="9.4" height="7.6" rx="1.6" fill="url(#gStk)" stroke="#33557a" stroke-width="1.1"/><rect x="61.40" y="249.80" width="9.4" height="7.6" rx="1.6" fill="url(#gStk)" stroke="#33557a" stroke-width="1.1"/><rect x="59.40" y="254.20" width="9.4" height="7.6" rx="1.6" fill="#9ccff2" stroke="#33557a" stroke-width="1.1"/><path d="M61.40,259.20 h5.4 M61.40,256.80 h5.4" stroke="#e8f6ff" stroke-width="0.9"/>
<rect x="85.2" y="269.00" width="16" height="15.7" fill="#f8f8f8" stroke="#8a8a8e" stroke-width="1"/>
<path d="M90.53,269.00 v15.7 M95.87,269.00 v15.7 M85.2,274.23 h16 M85.2,279.47 h16" stroke="#8a8a8e" stroke-width="1"/>
<circle cx="96.5" cy="280.10" r="4.6" fill="#1d5d9e" stroke="#0f3f70" stroke-width="0.6"/>
<path d="M96.5,278.80 v4" stroke="#ffffff" stroke-width="1.5"/><circle cx="96.5" cy="277.10" r="0.8" fill="#ffffff"/>
<rect x="63.60" y="289.40" width="9.4" height="7.6" rx="1.6" fill="url(#gStk)" stroke="#33557a" stroke-width="1.1"/><rect x="61.60" y="293.60" width="9.4" height="7.6" rx="1.6" fill="url(#gStk)" stroke="#33557a" stroke-width="1.1"/><rect x="59.60" y="298.00" width="9.4" height="7.6" rx="1.6" fill="#9ccff2" stroke="#33557a" stroke-width="1.1"/><path d="M61.60,303.00 h5.4 M61.60,300.60 h5.4" stroke="#e8f6ff" stroke-width="0.9"/>
<rect x="85.2" y="290.10" width="16" height="15.7" fill="#f8f8f8" stroke="#8a8a8e" stroke-width="1"/>
<path d="M90.53,290.10 v15.7 M95.87,290.10 v15.7 M85.2,295.33 h16 M85.2,300.57 h16" stroke="#8a8a8e" stroke-width="1"/>
<circle cx="96.5" cy="301.20" r="4.6" fill="#1d5d9e" stroke="#0f3f70" stroke-width="0.6"/>
<path d="M96.5,299.90 v4" stroke="#ffffff" stroke-width="1.5"/><circle cx="96.5" cy="298.20" r="0.8" fill="#ffffff"/>
<rect x="63.60" y="310.50" width="9.4" height="7.6" rx="1.6" fill="url(#gStk)" stroke="#33557a" stroke-width="1.1"/><rect x="61.60" y="314.70" width="9.4" height="7.6" rx="1.6" fill="url(#gStk)" stroke="#33557a" stroke-width="1.1"/><rect x="59.60" y="319.10" width="9.4" height="7.6" rx="1.6" fill="#9ccff2" stroke="#33557a" stroke-width="1.1"/><path d="M61.60,324.10 h5.4 M61.60,321.70 h5.4" stroke="#e8f6ff" stroke-width="0.9"/>
<rect x="85.2" y="311.20" width="16" height="15.7" fill="#f8f8f8" stroke="#8a8a8e" stroke-width="1"/>
<path d="M90.53,311.20 v15.7 M95.87,311.20 v15.7 M85.2,316.43 h16 M85.2,321.67 h16" stroke="#8a8a8e" stroke-width="1"/>
<circle cx="96.5" cy="322.30" r="4.6" fill="#1d5d9e" stroke="#0f3f70" stroke-width="0.6"/>
<path d="M96.5,321.00 v4" stroke="#ffffff" stroke-width="1.5"/><circle cx="96.5" cy="319.30" r="0.8" fill="#ffffff"/>
<rect x="63.60" y="331.60" width="9.4" height="7.6" rx="1.6" fill="url(#gStk)" stroke="#33557a" stroke-width="1.1"/><rect x="61.60" y="335.80" width="9.4" height="7.6" rx="1.6" fill="url(#gStk)" stroke="#33557a" stroke-width="1.1"/><rect x="59.60" y="340.20" width="9.4" height="7.6" rx="1.6" fill="#9ccff2" stroke="#33557a" stroke-width="1.1"/><path d="M61.60,345.20 h5.4 M61.60,342.80 h5.4" stroke="#e8f6ff" stroke-width="0.9"/>
<rect x="85.2" y="332.30" width="16" height="15.7" fill="#f8f8f8" stroke="#8a8a8e" stroke-width="1"/>
<path d="M90.53,332.30 v15.7 M95.87,332.30 v15.7 M85.2,337.53 h16 M85.2,342.77 h16" stroke="#8a8a8e" stroke-width="1"/>
<circle cx="96.5" cy="343.40" r="4.6" fill="#1d5d9e" stroke="#0f3f70" stroke-width="0.6"/>
<path d="M96.5,342.10 v4" stroke="#ffffff" stroke-width="1.5"/><circle cx="96.5" cy="340.40" r="0.8" fill="#ffffff"/>
<rect x="63.60" y="352.70" width="9.4" height="7.6" rx="1.6" fill="url(#gStk)" stroke="#33557a" stroke-width="1.1"/><rect x="61.60" y="356.90" width="9.4" height="7.6" rx="1.6" fill="url(#gStk)" stroke="#33557a" stroke-width="1.1"/><rect x="59.60" y="361.30" width="9.4" height="7.6" rx="1.6" fill="#9ccff2" stroke="#33557a" stroke-width="1.1"/><path d="M61.60,366.30 h5.4 M61.60,363.90 h5.4" stroke="#e8f6ff" stroke-width="0.9"/>
<rect x="85.2" y="353.40" width="16" height="15.7" fill="#f8f8f8" stroke="#8a8a8e" stroke-width="1"/>
<path d="M90.53,353.40 v15.7 M95.87,353.40 v15.7 M85.2,358.63 h16 M85.2,363.87 h16" stroke="#8a8a8e" stroke-width="1"/>
<circle cx="96.5" cy="364.50" r="4.6" fill="#1d5d9e" stroke="#0f3f70" stroke-width="0.6"/>
<path d="M96.5,363.20 v4" stroke="#ffffff" stroke-width="1.5"/><circle cx="96.5" cy="361.50" r="0.8" fill="#ffffff"/>
<rect x="63.60" y="373.80" width="9.4" height="7.6" rx="1.6" fill="url(#gStk)" stroke="#33557a" stroke-width="1.1"/><rect x="61.60" y="378.00" width="9.4" height="7.6" rx="1.6" fill="url(#gStk)" stroke="#33557a" stroke-width="1.1"/><rect x="59.60" y="382.40" width="9.4" height="7.6" rx="1.6" fill="#9ccff2" stroke="#33557a" stroke-width="1.1"/><path d="M61.60,387.40 h5.4 M61.60,385.00 h5.4" stroke="#e8f6ff" stroke-width="0.9"/>
<rect x="85.2" y="374.50" width="16" height="15.7" fill="#f8f8f8" stroke="#8a8a8e" stroke-width="1"/>
<path d="M90.53,374.50 v15.7 M95.87,374.50 v15.7 M85.2,379.73 h16 M85.2,384.97 h16" stroke="#8a8a8e" stroke-width="1"/>
<circle cx="96.5" cy="385.60" r="4.6" fill="#1d5d9e" stroke="#0f3f70" stroke-width="0.6"/>
<path d="M96.5,384.30 v4" stroke="#ffffff" stroke-width="1.5"/><circle cx="96.5" cy="382.60" r="0.8" fill="#ffffff"/>
<rect x="63.60" y="394.90" width="9.4" height="7.6" rx="1.6" fill="url(#gStk)" stroke="#33557a" stroke-width="1.1"/><rect x="61.60" y="399.10" width="9.4" height="7.6" rx="1.6" fill="url(#gStk)" stroke="#33557a" stroke-width="1.1"/><rect x="59.60" y="403.50" width="9.4" height="7.6" rx="1.6" fill="#9ccff2" stroke="#33557a" stroke-width="1.1"/><path d="M61.60,408.50 h5.4 M61.60,406.10 h5.4" stroke="#e8f6ff" stroke-width="0.9"/>
<rect x="85.2" y="395.60" width="16" height="15.7" fill="#f8f8f8" stroke="#8a8a8e" stroke-width="1"/>
<path d="M90.53,395.60 v15.7 M95.87,395.60 v15.7 M85.2,400.83 h16 M85.2,406.07 h16" stroke="#8a8a8e" stroke-width="1"/>
<circle cx="96.5" cy="406.70" r="4.6" fill="#1d5d9e" stroke="#0f3f70" stroke-width="0.6"/>
<path d="M96.5,405.40 v4" stroke="#ffffff" stroke-width="1.5"/><circle cx="96.5" cy="403.70" r="0.8" fill="#ffffff"/>
<rect x="86" y="414.5" width="14" height="2" fill="#a0a0a4"/>
</svg>
<div style="position:absolute;left:981.5px;top:0px;width:42.5px;height:768px;background:#f3f3f3;"></div>
</body></html>
